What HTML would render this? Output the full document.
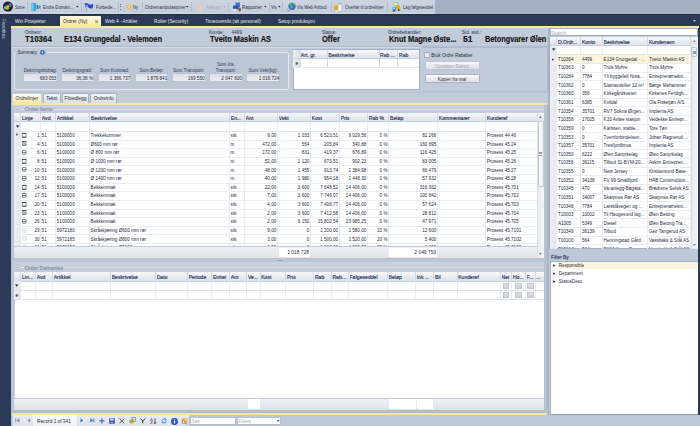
<!DOCTYPE html>
<html><head><meta charset="utf-8"><title>Ordrer</title>
<style>
*{margin:0;padding:0;box-sizing:border-box}
html,body{width:700px;height:426px;overflow:hidden}
body{position:relative;background:#c5cedc;font-family:"Liberation Sans",sans-serif;color:#1f2a3c}
.a{position:absolute}
.t{position:absolute;white-space:nowrap}
svg{position:absolute;overflow:visible}
</style></head><body>

<div class="a" style="left:0.00px;top:0.00px;width:700.00px;height:14.50px;background:#a2afc5"></div>
<div class="a" style="left:0.00px;top:0.00px;width:435.00px;height:14.40px;background:linear-gradient(#cdd5e1,#c4cddb);border-bottom:1px solid #d3dae4"></div>
<div class="a" style="left:27.00px;top:2.00px;width:0.80px;height:10.00px;background:#b3bdcc"></div>
<div class="a" style="left:81.00px;top:2.00px;width:0.80px;height:10.00px;background:#b3bdcc"></div>
<div class="a" style="left:118.00px;top:2.00px;width:0.80px;height:10.00px;background:#b3bdcc"></div>
<div class="a" style="left:142.00px;top:2.00px;width:0.80px;height:10.00px;background:#b3bdcc"></div>
<div class="a" style="left:191.00px;top:2.00px;width:0.80px;height:10.00px;background:#b3bdcc"></div>
<div class="a" style="left:228.00px;top:2.00px;width:0.80px;height:10.00px;background:#b3bdcc"></div>
<div class="a" style="left:269.00px;top:2.00px;width:0.80px;height:10.00px;background:#b3bdcc"></div>
<div class="a" style="left:282.00px;top:2.00px;width:0.80px;height:10.00px;background:#b3bdcc"></div>
<div class="a" style="left:331.00px;top:2.00px;width:0.80px;height:10.00px;background:#b3bdcc"></div>
<div class="a" style="left:387.00px;top:2.00px;width:0.80px;height:10.00px;background:#b3bdcc"></div>
<div class="a" style="left:120.30px;top:3.60px;width:0.80px;height:0.80px;background:#5d6778"></div>
<div class="a" style="left:120.30px;top:6.30px;width:0.80px;height:0.80px;background:#5d6778"></div>
<div class="a" style="left:120.30px;top:9.00px;width:0.80px;height:0.80px;background:#5d6778"></div>
<div class="t" style="font-size:4.8px;line-height:6.00px;top:5.30px;color:#28334a;transform:scaleX(0.865);transform-origin:0 50%;left:14.70px;">Sone</div>
<div class="t" style="font-size:4.8px;line-height:6.00px;top:5.30px;color:#28334a;transform:scaleX(0.874);transform-origin:0 50%;left:42.60px;">Endre Domain...</div>
<div class="t" style="font-size:4.8px;line-height:6.00px;top:5.30px;color:#28334a;transform:scaleX(0.919);transform-origin:0 50%;left:95.70px;">Forbede...</div>
<div class="t" style="font-size:4.8px;line-height:6.00px;top:5.30px;color:#28334a;transform:scaleX(0.869);transform-origin:0 50%;left:133.40px;">Ny</div>
<div class="t" style="font-size:4.8px;line-height:6.00px;top:5.30px;color:#28334a;transform:scaleX(0.906);transform-origin:0 50%;left:144.60px;">Ordremanipulasjoner</div>
<div class="t" style="font-size:4.8px;line-height:6.00px;top:5.30px;color:#a3abb7;transform:scaleX(0.879);transform-origin:0 50%;left:206.30px;">Fakturer</div>
<div class="t" style="font-size:4.8px;line-height:6.00px;top:5.30px;color:#28334a;transform:scaleX(0.937);transform-origin:0 50%;left:242.30px;">Rapporter</div>
<div class="t" style="font-size:4.8px;line-height:6.00px;top:5.30px;color:#28334a;transform:scaleX(0.821);transform-origin:0 50%;left:270.60px;">Vis</div>
<div class="t" style="font-size:4.8px;line-height:6.00px;top:5.30px;color:#28334a;transform:scaleX(0.901);transform-origin:0 50%;left:297.20px;">Vis Web Anbud</div>
<div class="t" style="font-size:4.8px;line-height:6.00px;top:5.30px;color:#28334a;transform:scaleX(0.887);transform-origin:0 50%;left:345.20px;">Overfør til ordrelinjer</div>
<div class="t" style="font-size:4.8px;line-height:6.00px;top:5.30px;color:#28334a;transform:scaleX(0.887);transform-origin:0 50%;left:402.60px;">Lag følgeseddel</div>
<svg style="left:76.0px;top:6.2px" width="3" height="2"><path d="M0 0h2.6L1.3 1.6z" fill="#1f2a3c"/></svg>
<svg style="left:186.4px;top:6.2px" width="3" height="2"><path d="M0 0h2.6L1.3 1.6z" fill="#1f2a3c"/></svg>
<svg style="left:223.10000000000002px;top:6.2px" width="3" height="2"><path d="M0 0h2.6L1.3 1.6z" fill="#9aa3b0"/></svg>
<svg style="left:263.5px;top:6.2px" width="3" height="2"><path d="M0 0h2.6L1.3 1.6z" fill="#1f2a3c"/></svg>
<svg style="left:277.6px;top:6.2px" width="3" height="2"><path d="M0 0h2.6L1.3 1.6z" fill="#1f2a3c"/></svg>
<svg style="left:0px;top:0px" width="14" height="14"><circle cx="7.9" cy="6.6" r="5" fill="#15181d"/><circle cx="7.9" cy="6.6" r="4.6" fill="#23282f"/><path d="M3.6 6.6L6 6.2V9.4L4.3 9z" fill="#3cc6bd"/><path d="M6 5.4L9.3 5L8.7 9.6H6z" fill="#f6a21c"/><path d="M8.8 3.4L11.7 3L11.3 6.6L9.3 6.9z" fill="#2f7ad8"/></svg>
<svg style="left:31px;top:2px" width="10" height="10"><rect x="0.5" y="1" width="4.5" height="8" fill="#3aa3d8"/><rect x="1.2" y="1.5" width="1.2" height="7" fill="#8fd6f2"/><rect x="5.5" y="3" width="2" height="4" fill="#2b87c0"/><rect x="7.8" y="3.5" width="1.8" height="3" fill="#3aa3d8"/></svg>
<svg style="left:84.3px;top:1.5px" width="11" height="11"><path d="M0.5 1.5Q2.5 0.2 4.5 2T9.5 1.6L8.6 6.2Q6.6 7.4 4.6 5.6T1.8 5.8z" fill="#2a48d0"/><path d="M2.5 2.3l0.6 1 1-0.4-0.5 1 0.8 0.7-1 0.1-0.3 1-0.5-0.9-1 0.2 0.6-0.8z" fill="#8fb0ff"/><path d="M1.5 2.5L2.8 10" stroke="#8a8f99" stroke-width="0.6"/></svg>
<svg style="left:126px;top:4.3px" width="6" height="6"><path d="M2.9 0L3.6 1.8 5.5 1 4.4 2.8 5.9 4 4 4.1 3.8 6 2.9 4.6 1.5 5.8 1.7 4 0 3.3 1.6 2.3 0.8 0.8 2.5 1.5z" fill="#f4b21b"/><circle cx="2.95" cy="3" r="1.3" fill="#ffd54a"/></svg>
<svg style="left:197.6px;top:2.6px" width="6" height="9"><rect x="0.3" y="0.3" width="4.2" height="8" fill="#e2ddd3" stroke="#c9c3b8" stroke-width="0.4"/><path d="M1 2h2.8M1 3.5h2.8M1 5h2.8M1 6.5h2.8" stroke="#c4bdb0" stroke-width="0.5"/></svg>
<svg style="left:232px;top:2.2px" width="10" height="10"><path d="M3.5 0.5h4.5v5h-4.5z" fill="#3d78c8"/><path d="M1 3.5h5.5v4H1z" fill="#2b5fae"/><ellipse cx="2.5" cy="8" rx="2.2" ry="1.3" fill="#dfe6f0"/><ellipse cx="7.6" cy="7.6" rx="1.5" ry="1.8" fill="#8a5a3a"/></svg>
<svg style="left:287px;top:2px" width="10" height="10"><circle cx="5" cy="4.3" r="3.6" fill="#2f6fd0"/><path d="M3 1.6c1.2 0.4 1.6 1.4 1 2.2s0.8 1.6 2 1.2M6 1.4c0.8 0.6 1.6 0.4 2 1.4" stroke="#5fcf4a" stroke-width="1.3" fill="none"/><rect x="0.5" y="6.3" width="2.6" height="3" fill="#8c96a5"/><rect x="0.9" y="6.8" width="1.8" height="1.2" fill="#d4dae3"/></svg>
<svg style="left:334.3px;top:2.5px" width="9" height="10"><rect x="0.2" y="2.5" width="4.6" height="4.6" fill="#f1a21a"/><rect x="4" y="0.8" width="3.8" height="7.6" fill="#f3f5f8" stroke="#9ea8b6" stroke-width="0.5"/><path d="M4.8 1.1h2.4" stroke="#58b84a" stroke-width="0.8"/><rect x="1.2" y="7" width="3.5" height="2" fill="#d9dee6"/></svg>
<svg style="left:391.6px;top:2px" width="10" height="10"><rect x="2" y="0.6" width="3" height="2.6" fill="#e9f2e6" stroke="#5cb85c" stroke-width="0.5"/><path d="M3.4 3.2h4.4l0.8 4.2H4z" fill="#f2a81d"/><path d="M0.4 5.2h3.8v3.3H0.4z" fill="#3aa0e0"/><rect x="0.9" y="5.7" width="2" height="1.2" fill="#bfe6fb"/><circle cx="2" cy="8.9" r="0.9" fill="#262b33"/><circle cx="6.8" cy="8.2" r="0.9" fill="#262b33"/></svg>
<div class="a" style="left:0.00px;top:14.40px;width:700.00px;height:411.60px;background:#2b3a56"></div>
<div class="a" style="left:0.00px;top:14.40px;width:700.00px;height:0.80px;background:#1f2b42"></div>
<div class="t" style="font-size:4.75px;line-height:5.94px;top:19.13px;color:#e4e9f1;transform:scaleX(0.997);transform-origin:0 50%;left:15.20px;">Win Prosjekter</div>
<div class="t" style="font-size:4.75px;line-height:5.94px;top:19.13px;color:#e4e9f1;transform:scaleX(1.001);transform-origin:0 50%;left:104.80px;">Web 4 - Artikler</div>
<div class="t" style="font-size:4.75px;line-height:5.94px;top:19.13px;color:#e4e9f1;transform:scaleX(1.007);transform-origin:0 50%;left:153.80px;">Roller (Security)</div>
<div class="t" style="font-size:4.75px;line-height:5.94px;top:19.13px;color:#e4e9f1;transform:scaleX(0.984);transform-origin:0 50%;left:205.00px;">Timeoversikt (alt personell)</div>
<div class="t" style="font-size:4.75px;line-height:5.94px;top:19.13px;color:#e4e9f1;transform:scaleX(0.995);transform-origin:0 50%;left:277.80px;">Setup produksjon</div>
<div class="a" style="left:60.00px;top:16.30px;width:41.00px;height:9.70px;background:linear-gradient(#fffbe8,#fdf0b8 60%,#fbe7a2);border-radius:1px 1px 0 0"></div>
<div class="t" style="font-size:4.75px;line-height:5.94px;top:19.13px;color:#1f2a3c;transform:scaleX(1.016);transform-origin:0 50%;left:63.00px;">Ordrer (Ny)</div>
<div class="t" style="font-size:7px;line-height:8.75px;top:17.93px;color:#4a5a78;left:94.40px;">×</div>
<svg style="left:692.5px;top:19.5px" width="4" height="3"><path d="M0 0h3L1.5 1.8z" fill="#c9d2e0"/></svg>
<div class="t" style="left:-0.2px;top:18.6px;font-size:4.8px;line-height:6px;color:#c3ccda;writing-mode:vertical-rl">Favorites</div>
<div class="a" style="left:11.00px;top:25.80px;width:687.60px;height:1.80px;background:#f9e9a0"></div>
<div class="a" style="left:11.00px;top:27.60px;width:537.40px;height:387.40px;background:#c1cbd9"></div>
<div class="a" style="left:10.70px;top:27.60px;width:0.90px;height:77.40px;background:#b3bfd0"></div>
<div class="a" style="left:10.70px;top:105.00px;width:3.10px;height:310.00px;background:#b9c4d4"></div>
<div class="a" style="left:548.40px;top:27.60px;width:1.20px;height:387.40px;background:#a7b3c6"></div>
<div class="a" style="left:12.60px;top:46.00px;width:535.80px;height:0.80px;background:#aeb9c9"></div>
<div class="a" style="left:12.60px;top:46.80px;width:535.80px;height:0.60px;background:#d5dce6"></div>
<div class="t" style="font-size:4.6px;line-height:5.75px;top:30.23px;color:#27324a;left:25.00px;">Ordrenr:</div>
<div class="t" style="font-size:8.2px;line-height:10.25px;top:34.58px;font-weight:bold;color:#111;transform:scaleX(0.964);transform-origin:0 50%;left:25.00px;-webkit-text-stroke:0.15px #111">T10364</div>
<div class="t" style="font-size:8.2px;line-height:10.25px;top:34.58px;font-weight:bold;color:#111;transform:scaleX(0.909);transform-origin:0 50%;left:63.60px;-webkit-text-stroke:0.15px #111">E134 Grungedal - Velemoen</div>
<div class="t" style="font-size:4.6px;line-height:5.75px;top:30.23px;color:#27324a;left:209.00px;">Kunde:</div>
<div class="t" style="font-size:4.6px;line-height:5.75px;top:30.23px;color:#27324a;left:231.50px;">4499</div>
<div class="t" style="font-size:8.2px;line-height:10.25px;top:34.58px;font-weight:bold;color:#111;transform:scaleX(0.903);transform-origin:0 50%;left:210.20px;-webkit-text-stroke:0.15px #111">Tveito Maskin AS</div>
<div class="t" style="font-size:4.6px;line-height:5.75px;top:30.23px;color:#27324a;left:322.00px;">Status:</div>
<div class="t" style="font-size:8.2px;line-height:10.25px;top:34.58px;font-weight:bold;color:#111;transform:scaleX(0.919);transform-origin:0 50%;left:322.10px;-webkit-text-stroke:0.15px #111">Offer</div>
<div class="t" style="font-size:4.6px;line-height:5.75px;top:30.23px;color:#27324a;left:388.00px;">Ordrebehandler:</div>
<div class="t" style="font-size:8.2px;line-height:10.25px;top:34.58px;font-weight:bold;color:#111;transform:scaleX(0.908);transform-origin:0 50%;left:388.60px;-webkit-text-stroke:0.15px #111">Knut Magne Øste...</div>
<div class="t" style="font-size:4.6px;line-height:5.75px;top:30.23px;color:#27324a;left:461.80px;">Std. avd.:</div>
<div class="t" style="font-size:8.2px;line-height:10.25px;top:34.58px;font-weight:bold;color:#111;transform:scaleX(1.053);transform-origin:0 50%;left:462.60px;-webkit-text-stroke:0.15px #111">51</div>
<div class="t" style="font-size:8.2px;line-height:10.25px;top:34.58px;font-weight:bold;color:#111;transform:scaleX(0.892);transform-origin:0 50%;left:485.40px;-webkit-text-stroke:0.15px #111">Betongvarer Ølen</div>
<div class="a" style="left:14.4px;top:52.3px;width:274.2px;height:37.5px;border:0.9px solid #e6eaf0;border-radius:2px;background:#bcc6d5"></div>
<div class="a" style="left:16.00px;top:50.00px;width:31.00px;height:4.50px;background:linear-gradient(#c1cbd9 50%,#bcc6d5 50%)"></div>
<div class="t" style="font-size:4.5px;line-height:5.62px;top:50.49px;color:#1f2a3c;left:17.60px;">Summary</div>
<svg style="left:40.2px;top:49.7px" width="5" height="5"><circle cx="2.4" cy="2.4" r="2.3" fill="#2a5bc0"/><circle cx="2.1" cy="2" r="1.2" fill="#6e9be8"/><rect x="2.1" y="1.6" width="0.7" height="2" fill="#fff"/></svg>
<div class="a" style="left:22.90px;top:73.20px;width:34.70px;height:8.50px;background:linear-gradient(#dce1e9,#e8ebf0);border:0.7px solid #bac3d0"></div>
<div class="t" style="font-size:4.6px;line-height:5.75px;top:75.62px;color:#1f2a3c;left:16.40px;width:40.00px;text-align:right;">683 053</div>
<div class="t" style="font-size:4.6px;line-height:5.75px;top:68.02px;color:#2a3a5a;left:20.25px;width:40.00px;text-align:center;">Dekningsbidrag:</div>
<div class="a" style="left:60.50px;top:73.20px;width:33.70px;height:8.50px;background:linear-gradient(#dce1e9,#e8ebf0);border:0.7px solid #bac3d0"></div>
<div class="t" style="font-size:4.6px;line-height:5.75px;top:75.62px;color:#1f2a3c;left:53.00px;width:40.00px;text-align:right;">36,38 %</div>
<div class="t" style="font-size:4.6px;line-height:5.75px;top:68.02px;color:#2a3a5a;left:57.35px;width:40.00px;text-align:center;">Dekningsgrad:</div>
<div class="a" style="left:97.60px;top:73.20px;width:33.90px;height:8.50px;background:linear-gradient(#dce1e9,#e8ebf0);border:0.7px solid #bac3d0"></div>
<div class="t" style="font-size:4.6px;line-height:5.75px;top:75.62px;color:#1f2a3c;left:90.30px;width:40.00px;text-align:right;">1 366 737</div>
<div class="t" style="font-size:4.6px;line-height:5.75px;top:68.02px;color:#2a3a5a;left:94.55px;width:40.00px;text-align:center;">Sum Kostnad:</div>
<div class="a" style="left:134.70px;top:73.20px;width:33.70px;height:8.50px;background:linear-gradient(#dce1e9,#e8ebf0);border:0.7px solid #bac3d0"></div>
<div class="t" style="font-size:4.6px;line-height:5.75px;top:75.62px;color:#1f2a3c;left:127.20px;width:40.00px;text-align:right;">1 879 841</div>
<div class="t" style="font-size:4.6px;line-height:5.75px;top:68.02px;color:#2a3a5a;left:131.55px;width:40.00px;text-align:center;">Sum Beløp:</div>
<div class="a" style="left:171.70px;top:73.20px;width:34.00px;height:8.50px;background:linear-gradient(#dce1e9,#e8ebf0);border:0.7px solid #bac3d0"></div>
<div class="t" style="font-size:4.6px;line-height:5.75px;top:75.62px;color:#1f2a3c;left:164.50px;width:40.00px;text-align:right;">169 550</div>
<div class="t" style="font-size:4.6px;line-height:5.75px;top:68.02px;color:#2a3a5a;left:168.70px;width:40.00px;text-align:center;">Sum Transport:</div>
<div class="a" style="left:209.00px;top:73.20px;width:34.00px;height:8.50px;background:linear-gradient(#dce1e9,#e8ebf0);border:0.7px solid #bac3d0"></div>
<div class="t" style="font-size:4.6px;line-height:5.75px;top:75.62px;color:#1f2a3c;left:201.80px;width:40.00px;text-align:right;">2 047 600</div>
<div class="t" style="font-size:4.6px;line-height:5.75px;top:61.92px;color:#2a3a5a;left:206.00px;width:40.00px;text-align:center;">Sum Ink.</div>
<div class="t" style="font-size:4.6px;line-height:5.75px;top:68.02px;color:#2a3a5a;left:206.00px;width:40.00px;text-align:center;">Transport:</div>
<div class="a" style="left:246.20px;top:73.20px;width:34.20px;height:8.50px;background:linear-gradient(#dce1e9,#e8ebf0);border:0.7px solid #bac3d0"></div>
<div class="t" style="font-size:4.6px;line-height:5.75px;top:75.62px;color:#1f2a3c;left:239.20px;width:40.00px;text-align:right;">1 016 724</div>
<div class="t" style="font-size:4.6px;line-height:5.75px;top:68.02px;color:#2a3a5a;left:243.30px;width:40.00px;text-align:center;">Sum Vekt(kg):</div>
<div class="a" style="left:292.50px;top:48.80px;width:127.70px;height:41.20px;background:#fff;border:0.8px solid #9fb0c6"></div>
<div class="a" style="left:293.20px;top:49.50px;width:126.30px;height:8.90px;background:linear-gradient(#f6f7fa,#dfe4eb)"></div>
<div class="a" style="left:293.20px;top:49.50px;width:6.40px;height:17.50px;background:linear-gradient(90deg,#e9ecf1,#dde2e9)"></div>
<div class="a" style="left:299.60px;top:49.50px;width:0.70px;height:17.50px;background:#d3d9e2"></div>
<div class="a" style="left:327.20px;top:49.50px;width:0.70px;height:17.50px;background:#d3d9e2"></div>
<div class="a" style="left:378.70px;top:49.50px;width:0.70px;height:17.50px;background:#d3d9e2"></div>
<div class="a" style="left:397.40px;top:49.50px;width:0.70px;height:17.50px;background:#d3d9e2"></div>
<div class="a" style="left:293.20px;top:58.10px;width:126.30px;height:0.60px;background:#c9d0da"></div>
<div class="a" style="left:293.20px;top:66.80px;width:126.30px;height:0.60px;background:#e3e7ed"></div>
<div class="t" style="font-size:5.1px;line-height:6.38px;top:51.71px;color:#263a60;left:300.80px;-webkit-text-stroke:0.15px #1f3358">Art. gr.</div>
<div class="t" style="font-size:5.1px;line-height:6.38px;top:51.71px;color:#263a60;left:328.60px;-webkit-text-stroke:0.15px #1f3358">Beskrivelse</div>
<div class="t" style="font-size:5.1px;line-height:6.38px;top:51.71px;color:#263a60;left:380.00px;-webkit-text-stroke:0.15px #1f3358">Rab ...</div>
<div class="t" style="font-size:5.1px;line-height:6.38px;top:51.71px;color:#263a60;left:399.00px;-webkit-text-stroke:0.15px #1f3358">Rab</div>
<div class="t" style="font-size:4px;line-height:5.00px;top:61.40px;color:#3b4a63;left:294.60px;">✱</div>
<div class="a" style="left:421.5px;top:46.9px;width:126px;height:45.6px;border:0.8px solid #b0bccc;border-left:none;border-radius:0 2px 2px 0"></div>
<div class="a" style="left:424.20px;top:51.60px;width:6.20px;height:6.00px;background:linear-gradient(#dfe3ea,#f3f5f8);border:0.8px solid #a4afbf"></div>
<div class="t" style="font-size:4.6px;line-height:5.75px;top:53.23px;color:#1f2a3c;left:431.20px;">Bruk Ordre Rabatter</div>
<div class="a" style="left:424.60px;top:60.90px;width:55.10px;height:9.40px;background:linear-gradient(#fafbfc,#e6e9ee 50%,#dde1e8);border:0.8px solid #bcc4d0;border-radius:1.5px"></div>
<div class="t" style="font-size:4.6px;line-height:5.75px;top:63.82px;color:#a2aab6;left:425.00px;width:54.00px;text-align:center;">Oppdater Rabatt</div>
<div class="a" style="left:424.60px;top:73.70px;width:55.10px;height:9.60px;background:linear-gradient(#fcfcfd,#e8ebf0 50%,#dde1e8);border:0.8px solid #a9b3c2;border-radius:1.5px"></div>
<div class="t" style="font-size:4.6px;line-height:5.75px;top:76.82px;color:#1f2a3c;left:425.00px;width:54.00px;text-align:center;">Kopier fra mal</div>
<div class="a" style="left:12.60px;top:91.80px;width:535.80px;height:0.70px;background:#b8c3d2"></div>
<div class="a" style="left:12.40px;top:93.00px;width:29.80px;height:10.00px;background:linear-gradient(#fdfcf6,#fbeeb8 70%,#f9e39a);border:0.6px solid #c7cfda;border-bottom:none"></div>
<div class="t" style="font-size:4.8px;line-height:6.00px;top:96.00px;color:#1f2a3c;left:15.60px;">Ordrelinjer</div>
<div class="a" style="left:42.90px;top:93.00px;width:17.90px;height:10.00px;background:linear-gradient(#f1f3f7,#d9dfe8);border:0.6px solid #aab6c7;border-bottom:none"></div>
<div class="t" style="font-size:4.8px;line-height:6.00px;top:96.00px;color:#1f2a3c;left:31.85px;width:40.00px;text-align:center;">Tekst</div>
<div class="a" style="left:61.50px;top:93.00px;width:27.90px;height:10.00px;background:linear-gradient(#f1f3f7,#d9dfe8);border:0.6px solid #aab6c7;border-bottom:none"></div>
<div class="t" style="font-size:4.8px;line-height:6.00px;top:96.00px;color:#1f2a3c;left:55.45px;width:40.00px;text-align:center;">Filvedlegg</div>
<div class="a" style="left:90.10px;top:93.00px;width:27.10px;height:10.00px;background:linear-gradient(#f1f3f7,#d9dfe8);border:0.6px solid #aab6c7;border-bottom:none"></div>
<div class="t" style="font-size:4.8px;line-height:6.00px;top:96.00px;color:#1f2a3c;left:83.65px;width:40.00px;text-align:center;">Ordreinfo</div>
<div class="a" style="left:11.90px;top:102.80px;width:535.10px;height:2.20px;background:#f9e9a0"></div>
<div class="a" style="left:12.60px;top:105.20px;width:534.40px;height:7.40px;background:linear-gradient(#c9d2de,#c3ccd9)"></div>
<div class="a" style="left:19.40px;top:108.75px;width:4.40px;height:0.70px;background:#d9dfe8"></div>
<div class="a" style="left:54.38px;top:108.75px;width:490.62px;height:0.70px;background:#d9dfe8"></div>
<svg style="left:14.20px;top:106.70px" width="6" height="5"><rect x="0.3" y="0.3" width="5" height="4.3" rx="1.2" fill="#d3d9e3" stroke="#a6b1c2" stroke-width="0.5"/><rect x="1.6" y="2.2" width="2.4" height="0.55" fill="#7d8aa0"/></svg>
<div class="t" style="font-size:5.3px;line-height:6.62px;top:105.99px;color:#7f8da6;left:24.80px;-webkit-text-stroke:0.1px #7f8da6">Order Items</div>
<div class="a" style="left:13.80px;top:112.60px;width:530.40px;height:145.40px;background:#fff;border-left:0.6px solid #c3cbd7"></div>
<div class="a" style="left:13.80px;top:112.60px;width:530.40px;height:9.40px;background:linear-gradient(#f7f8fa,#e9ecf1 50%,#dde2e9)"></div>
<div class="a" style="left:13.80px;top:121.40px;width:530.40px;height:0.60px;background:#c9d0da"></div>
<div class="a" style="left:14.40px;top:122.00px;width:6.30px;height:124.10px;background:linear-gradient(90deg,#eceef3,#e2e6ec)"></div>
<div class="t" style="font-size:5.1px;line-height:6.38px;top:115.21px;color:#1f3358;left:22.00px;-webkit-text-stroke:0.15px #1f3358;width:18.30px;overflow:hidden">Linje</div>
<div class="t" style="font-size:5.1px;line-height:6.38px;top:115.21px;color:#1f3358;left:41.80px;-webkit-text-stroke:0.15px #1f3358;width:13.50px;overflow:hidden">Avd</div>
<div class="t" style="font-size:5.1px;line-height:6.38px;top:115.21px;color:#1f3358;left:56.80px;-webkit-text-stroke:0.15px #1f3358;width:32.50px;overflow:hidden">Artikkel</div>
<div class="t" style="font-size:5.1px;line-height:6.38px;top:115.21px;color:#1f3358;left:90.80px;-webkit-text-stroke:0.15px #1f3358;width:138.50px;overflow:hidden">Beskrivelse</div>
<div class="t" style="font-size:5.1px;line-height:6.38px;top:115.21px;color:#1f3358;left:230.80px;-webkit-text-stroke:0.15px #1f3358;width:13.50px;overflow:hidden">En...</div>
<div class="t" style="font-size:5.1px;line-height:6.38px;top:115.21px;color:#1f3358;left:245.80px;-webkit-text-stroke:0.15px #1f3358;width:31.50px;overflow:hidden">Ant</div>
<div class="t" style="font-size:5.1px;line-height:6.38px;top:115.21px;color:#1f3358;left:278.80px;-webkit-text-stroke:0.15px #1f3358;width:31.50px;overflow:hidden">Vekt</div>
<div class="t" style="font-size:5.1px;line-height:6.38px;top:115.21px;color:#1f3358;left:311.80px;-webkit-text-stroke:0.15px #1f3358;width:27.25px;overflow:hidden">Kost</div>
<div class="t" style="font-size:5.1px;line-height:6.38px;top:115.21px;color:#1f3358;left:340.55px;-webkit-text-stroke:0.15px #1f3358;width:26.75px;overflow:hidden">Pris</div>
<div class="t" style="font-size:5.1px;line-height:6.38px;top:115.21px;color:#1f3358;left:368.80px;-webkit-text-stroke:0.15px #1f3358;width:19.75px;overflow:hidden">Rab %</div>
<div class="t" style="font-size:5.1px;line-height:6.38px;top:115.21px;color:#1f3358;left:390.05px;-webkit-text-stroke:0.15px #1f3358;width:47.25px;overflow:hidden">Beløp</div>
<div class="t" style="font-size:5.1px;line-height:6.38px;top:115.21px;color:#1f3358;left:438.80px;-webkit-text-stroke:0.15px #1f3358;width:46.50px;overflow:hidden">Kommentarer</div>
<div class="t" style="font-size:5.1px;line-height:6.38px;top:115.21px;color:#1f3358;left:486.80px;-webkit-text-stroke:0.15px #1f3358;width:50.20px;overflow:hidden">Kunderef</div>
<div class="a" style="left:20.35px;top:113.10px;width:0.70px;height:8.90px;background:#d2d8e1"></div>
<div class="a" style="left:20.40px;top:122.00px;width:0.60px;height:124.10px;background:#e9ecf1"></div>
<div class="a" style="left:40.15px;top:113.10px;width:0.70px;height:8.90px;background:#d2d8e1"></div>
<div class="a" style="left:40.20px;top:122.00px;width:0.60px;height:124.10px;background:#e9ecf1"></div>
<div class="a" style="left:55.15px;top:113.10px;width:0.70px;height:8.90px;background:#d2d8e1"></div>
<div class="a" style="left:55.20px;top:122.00px;width:0.60px;height:124.10px;background:#e9ecf1"></div>
<div class="a" style="left:89.15px;top:113.10px;width:0.70px;height:8.90px;background:#d2d8e1"></div>
<div class="a" style="left:89.20px;top:122.00px;width:0.60px;height:124.10px;background:#e9ecf1"></div>
<div class="a" style="left:229.15px;top:113.10px;width:0.70px;height:8.90px;background:#d2d8e1"></div>
<div class="a" style="left:229.20px;top:122.00px;width:0.60px;height:124.10px;background:#e9ecf1"></div>
<div class="a" style="left:244.15px;top:113.10px;width:0.70px;height:8.90px;background:#d2d8e1"></div>
<div class="a" style="left:244.20px;top:122.00px;width:0.60px;height:124.10px;background:#e9ecf1"></div>
<div class="a" style="left:277.15px;top:113.10px;width:0.70px;height:8.90px;background:#d2d8e1"></div>
<div class="a" style="left:277.20px;top:122.00px;width:0.60px;height:124.10px;background:#e9ecf1"></div>
<div class="a" style="left:310.15px;top:113.10px;width:0.70px;height:8.90px;background:#d2d8e1"></div>
<div class="a" style="left:310.20px;top:122.00px;width:0.60px;height:124.10px;background:#e9ecf1"></div>
<div class="a" style="left:338.90px;top:113.10px;width:0.70px;height:8.90px;background:#d2d8e1"></div>
<div class="a" style="left:338.95px;top:122.00px;width:0.60px;height:124.10px;background:#e9ecf1"></div>
<div class="a" style="left:367.15px;top:113.10px;width:0.70px;height:8.90px;background:#d2d8e1"></div>
<div class="a" style="left:367.20px;top:122.00px;width:0.60px;height:124.10px;background:#e9ecf1"></div>
<div class="a" style="left:388.40px;top:113.10px;width:0.70px;height:8.90px;background:#d2d8e1"></div>
<div class="a" style="left:388.45px;top:122.00px;width:0.60px;height:124.10px;background:#e9ecf1"></div>
<div class="a" style="left:437.15px;top:113.10px;width:0.70px;height:8.90px;background:#d2d8e1"></div>
<div class="a" style="left:437.20px;top:122.00px;width:0.60px;height:124.10px;background:#e9ecf1"></div>
<div class="a" style="left:485.15px;top:113.10px;width:0.70px;height:8.90px;background:#d2d8e1"></div>
<div class="a" style="left:485.20px;top:122.00px;width:0.60px;height:124.10px;background:#e9ecf1"></div>
<div class="a" style="left:536.85px;top:113.10px;width:0.70px;height:8.90px;background:#d2d8e1"></div>
<div class="a" style="left:536.90px;top:122.00px;width:0.60px;height:124.10px;background:#e9ecf1"></div>
<div class="a" style="left:13.80px;top:130.60px;width:523.40px;height:0.60px;background:#e1e5eb"></div>
<svg style="left:15.5px;top:124.9px" width="4" height="4"><path d="M0 0.3h3.4L1.7 3z" fill="#33415a"/></svg>
<div class="a" style="left:0;top:0;width:700px;height:246.10px;overflow:hidden">
<div class="a" style="left:20.70px;top:139.53px;width:516.50px;height:0.60px;background:#e9ecf1"></div>
<div class="a" style="left:14.40px;top:139.53px;width:6.30px;height:0.60px;background:#f4f5f8"></div>
<svg style="left:21.9px;top:132.72px" width="5" height="5"><path d="M0.3 0.3h3.8v4H0.3z" fill="none" stroke="#3e4657" stroke-width="0.55"/><rect x="0" y="0" width="4.4" height="0.9" fill="#3e4657"/><rect x="0" y="3.7" width="4.4" height="0.9" fill="#3e4657"/></svg>
<div class="t" style="font-size:4.6px;line-height:5.75px;top:133.04px;color:#1f2a3c;left:24.50px;width:15.00px;text-align:right;">1</div>
<div class="t" style="font-size:4.6px;line-height:5.75px;top:133.04px;color:#1f2a3c;left:41.60px;">51</div>
<div class="t" style="font-size:4.6px;line-height:5.75px;top:133.04px;color:#1f2a3c;left:56.80px;">5100000</div>
<div class="t" style="font-size:4.6px;line-height:5.75px;top:133.04px;color:#1f2a3c;left:90.60px;">Trekkekummer</div>
<div class="t" style="font-size:4.6px;line-height:5.75px;top:133.04px;color:#1f2a3c;left:230.60px;">stk</div>
<div class="t" style="font-size:4.6px;line-height:5.75px;top:133.04px;color:#1f2a3c;left:246.30px;width:30.00px;text-align:right;">9,00</div>
<div class="t" style="font-size:4.6px;line-height:5.75px;top:133.04px;color:#1f2a3c;left:279.30px;width:30.00px;text-align:right;">1 033</div>
<div class="t" style="font-size:4.6px;line-height:5.75px;top:133.04px;color:#1f2a3c;left:308.10px;width:30.00px;text-align:right;">6 523,51</div>
<div class="t" style="font-size:4.6px;line-height:5.75px;top:133.04px;color:#1f2a3c;left:336.30px;width:30.00px;text-align:right;">9 029,56</div>
<div class="t" style="font-size:4.6px;line-height:5.75px;top:133.04px;color:#1f2a3c;left:367.50px;width:20.00px;text-align:right;">0 %</div>
<div class="t" style="font-size:4.6px;line-height:5.75px;top:133.04px;color:#1f2a3c;left:396.30px;width:40.00px;text-align:right;">81 266</div>
<div class="t" style="font-size:4.6px;line-height:5.75px;top:133.04px;color:#1f2a3c;left:486.80px;">Prosess 44.46</div>
<svg style="left:15.8px;top:133.31px" width="3" height="3"><path d="M0.2 0.2L2.2 1.5L0.2 2.8z" fill="#33415a"/></svg>
<div class="a" style="left:20.70px;top:148.16px;width:516.50px;height:0.60px;background:#e9ecf1"></div>
<div class="a" style="left:14.40px;top:148.16px;width:6.30px;height:0.60px;background:#f4f5f8"></div>
<svg style="left:21.9px;top:141.34px" width="5" height="5"><rect x="0" y="0" width="4.4" height="0.9" fill="#3e4657"/><rect x="0" y="3.7" width="4.4" height="0.9" fill="#3e4657"/><path d="M0.3 0.5v3.6M4.1 0.5v3.6M0.8 1L2.2 2.3 3.6 1M0.8 3.6L2.2 2.3 3.6 3.6" stroke="#3e4657" stroke-width="0.5" fill="none"/></svg>
<div class="t" style="font-size:4.6px;line-height:5.75px;top:141.67px;color:#1f2a3c;left:24.50px;width:15.00px;text-align:right;">4</div>
<div class="t" style="font-size:4.6px;line-height:5.75px;top:141.67px;color:#1f2a3c;left:41.60px;">51</div>
<div class="t" style="font-size:4.6px;line-height:5.75px;top:141.67px;color:#1f2a3c;left:56.80px;">5100000</div>
<div class="t" style="font-size:4.6px;line-height:5.75px;top:141.67px;color:#1f2a3c;left:90.60px;">Ø600 mm rør</div>
<div class="t" style="font-size:4.6px;line-height:5.75px;top:141.67px;color:#1f2a3c;left:230.60px;">m</div>
<div class="t" style="font-size:4.6px;line-height:5.75px;top:141.67px;color:#1f2a3c;left:246.30px;width:30.00px;text-align:right;">472,00</div>
<div class="t" style="font-size:4.6px;line-height:5.75px;top:141.67px;color:#1f2a3c;left:279.30px;width:30.00px;text-align:right;">554</div>
<div class="t" style="font-size:4.6px;line-height:5.75px;top:141.67px;color:#1f2a3c;left:308.10px;width:30.00px;text-align:right;">205,84</div>
<div class="t" style="font-size:4.6px;line-height:5.75px;top:141.67px;color:#1f2a3c;left:336.30px;width:30.00px;text-align:right;">340,88</div>
<div class="t" style="font-size:4.6px;line-height:5.75px;top:141.67px;color:#1f2a3c;left:367.50px;width:20.00px;text-align:right;">0 %</div>
<div class="t" style="font-size:4.6px;line-height:5.75px;top:141.67px;color:#1f2a3c;left:396.30px;width:40.00px;text-align:right;">160 895</div>
<div class="t" style="font-size:4.6px;line-height:5.75px;top:141.67px;color:#1f2a3c;left:486.80px;">Prosess 45.24</div>
<div class="a" style="left:20.70px;top:156.79px;width:516.50px;height:0.60px;background:#e9ecf1"></div>
<div class="a" style="left:14.40px;top:156.79px;width:6.30px;height:0.60px;background:#f4f5f8"></div>
<svg style="left:21.9px;top:149.97px" width="5" height="5"><rect x="0.4" y="0.4" width="3.6" height="3.8" rx="0.4" fill="none" stroke="#3e4657" stroke-width="0.7"/><rect x="0.4" y="2" width="3.6" height="0.6" fill="#3e4657"/></svg>
<div class="t" style="font-size:4.6px;line-height:5.75px;top:150.30px;color:#1f2a3c;left:24.50px;width:15.00px;text-align:right;">6</div>
<div class="t" style="font-size:4.6px;line-height:5.75px;top:150.30px;color:#1f2a3c;left:41.60px;">51</div>
<div class="t" style="font-size:4.6px;line-height:5.75px;top:150.30px;color:#1f2a3c;left:56.80px;">5100000</div>
<div class="t" style="font-size:4.6px;line-height:5.75px;top:150.30px;color:#1f2a3c;left:90.60px;">Ø 800 mm rør</div>
<div class="t" style="font-size:4.6px;line-height:5.75px;top:150.30px;color:#1f2a3c;left:230.60px;">m</div>
<div class="t" style="font-size:4.6px;line-height:5.75px;top:150.30px;color:#1f2a3c;left:246.30px;width:30.00px;text-align:right;">172,00</div>
<div class="t" style="font-size:4.6px;line-height:5.75px;top:150.30px;color:#1f2a3c;left:279.30px;width:30.00px;text-align:right;">831</div>
<div class="t" style="font-size:4.6px;line-height:5.75px;top:150.30px;color:#1f2a3c;left:308.10px;width:30.00px;text-align:right;">419,37</div>
<div class="t" style="font-size:4.6px;line-height:5.75px;top:150.30px;color:#1f2a3c;left:336.30px;width:30.00px;text-align:right;">676,89</div>
<div class="t" style="font-size:4.6px;line-height:5.75px;top:150.30px;color:#1f2a3c;left:367.50px;width:20.00px;text-align:right;">0 %</div>
<div class="t" style="font-size:4.6px;line-height:5.75px;top:150.30px;color:#1f2a3c;left:396.30px;width:40.00px;text-align:right;">116 425</div>
<div class="t" style="font-size:4.6px;line-height:5.75px;top:150.30px;color:#1f2a3c;left:486.80px;">Prosess 45.25</div>
<div class="a" style="left:20.70px;top:165.42px;width:516.50px;height:0.60px;background:#e9ecf1"></div>
<div class="a" style="left:14.40px;top:165.42px;width:6.30px;height:0.60px;background:#f4f5f8"></div>
<svg style="left:21.9px;top:158.60px" width="5" height="5"><path d="M0.3 0.3h3.8v4H0.3z" fill="none" stroke="#3e4657" stroke-width="0.55"/><rect x="0" y="0" width="4.4" height="0.9" fill="#3e4657"/><rect x="0" y="3.7" width="4.4" height="0.9" fill="#3e4657"/></svg>
<div class="t" style="font-size:4.6px;line-height:5.75px;top:158.93px;color:#1f2a3c;left:24.50px;width:15.00px;text-align:right;">8</div>
<div class="t" style="font-size:4.6px;line-height:5.75px;top:158.93px;color:#1f2a3c;left:41.60px;">51</div>
<div class="t" style="font-size:4.6px;line-height:5.75px;top:158.93px;color:#1f2a3c;left:56.80px;">5100000</div>
<div class="t" style="font-size:4.6px;line-height:5.75px;top:158.93px;color:#1f2a3c;left:90.60px;">Ø 1000 mm rør</div>
<div class="t" style="font-size:4.6px;line-height:5.75px;top:158.93px;color:#1f2a3c;left:230.60px;">m</div>
<div class="t" style="font-size:4.6px;line-height:5.75px;top:158.93px;color:#1f2a3c;left:246.30px;width:30.00px;text-align:right;">52,00</div>
<div class="t" style="font-size:4.6px;line-height:5.75px;top:158.93px;color:#1f2a3c;left:279.30px;width:30.00px;text-align:right;">1 120</div>
<div class="t" style="font-size:4.6px;line-height:5.75px;top:158.93px;color:#1f2a3c;left:308.10px;width:30.00px;text-align:right;">673,51</div>
<div class="t" style="font-size:4.6px;line-height:5.75px;top:158.93px;color:#1f2a3c;left:336.30px;width:30.00px;text-align:right;">902,23</div>
<div class="t" style="font-size:4.6px;line-height:5.75px;top:158.93px;color:#1f2a3c;left:367.50px;width:20.00px;text-align:right;">0 %</div>
<div class="t" style="font-size:4.6px;line-height:5.75px;top:158.93px;color:#1f2a3c;left:396.30px;width:40.00px;text-align:right;">83 005</div>
<div class="t" style="font-size:4.6px;line-height:5.75px;top:158.93px;color:#1f2a3c;left:486.80px;">Prosess 45.26</div>
<div class="a" style="left:20.70px;top:174.05px;width:516.50px;height:0.60px;background:#e9ecf1"></div>
<div class="a" style="left:14.40px;top:174.05px;width:6.30px;height:0.60px;background:#f4f5f8"></div>
<svg style="left:21.9px;top:167.24px" width="5" height="5"><rect x="0.4" y="0.4" width="3.6" height="3.8" rx="0.4" fill="none" stroke="#3e4657" stroke-width="0.7"/><rect x="0.4" y="2" width="3.6" height="0.6" fill="#3e4657"/></svg>
<div class="t" style="font-size:4.6px;line-height:5.75px;top:167.56px;color:#1f2a3c;left:24.50px;width:15.00px;text-align:right;">10</div>
<div class="t" style="font-size:4.6px;line-height:5.75px;top:167.56px;color:#1f2a3c;left:41.60px;">51</div>
<div class="t" style="font-size:4.6px;line-height:5.75px;top:167.56px;color:#1f2a3c;left:56.80px;">5100000</div>
<div class="t" style="font-size:4.6px;line-height:5.75px;top:167.56px;color:#1f2a3c;left:90.60px;">Ø 1200 mm rør</div>
<div class="t" style="font-size:4.6px;line-height:5.75px;top:167.56px;color:#1f2a3c;left:230.60px;">m</div>
<div class="t" style="font-size:4.6px;line-height:5.75px;top:167.56px;color:#1f2a3c;left:246.30px;width:30.00px;text-align:right;">48,00</div>
<div class="t" style="font-size:4.6px;line-height:5.75px;top:167.56px;color:#1f2a3c;left:279.30px;width:30.00px;text-align:right;">1 455</div>
<div class="t" style="font-size:4.6px;line-height:5.75px;top:167.56px;color:#1f2a3c;left:308.10px;width:30.00px;text-align:right;">913,74</div>
<div class="t" style="font-size:4.6px;line-height:5.75px;top:167.56px;color:#1f2a3c;left:336.30px;width:30.00px;text-align:right;">1 384,98</div>
<div class="t" style="font-size:4.6px;line-height:5.75px;top:167.56px;color:#1f2a3c;left:367.50px;width:20.00px;text-align:right;">0 %</div>
<div class="t" style="font-size:4.6px;line-height:5.75px;top:167.56px;color:#1f2a3c;left:396.30px;width:40.00px;text-align:right;">66 479</div>
<div class="t" style="font-size:4.6px;line-height:5.75px;top:167.56px;color:#1f2a3c;left:486.80px;">Prosess 45.27</div>
<div class="a" style="left:20.70px;top:182.68px;width:516.50px;height:0.60px;background:#e9ecf1"></div>
<div class="a" style="left:14.40px;top:182.68px;width:6.30px;height:0.60px;background:#f4f5f8"></div>
<svg style="left:21.9px;top:175.87px" width="5" height="5"><rect x="0.4" y="0.4" width="3.6" height="3.8" rx="0.4" fill="none" stroke="#3e4657" stroke-width="0.7"/><rect x="0.4" y="2" width="3.6" height="0.6" fill="#3e4657"/></svg>
<div class="t" style="font-size:4.6px;line-height:5.75px;top:176.19px;color:#1f2a3c;left:24.50px;width:15.00px;text-align:right;">12</div>
<div class="t" style="font-size:4.6px;line-height:5.75px;top:176.19px;color:#1f2a3c;left:41.60px;">51</div>
<div class="t" style="font-size:4.6px;line-height:5.75px;top:176.19px;color:#1f2a3c;left:56.80px;">5100000</div>
<div class="t" style="font-size:4.6px;line-height:5.75px;top:176.19px;color:#1f2a3c;left:90.60px;">Ø 1400 mm rør</div>
<div class="t" style="font-size:4.6px;line-height:5.75px;top:176.19px;color:#1f2a3c;left:230.60px;">m</div>
<div class="t" style="font-size:4.6px;line-height:5.75px;top:176.19px;color:#1f2a3c;left:246.30px;width:30.00px;text-align:right;">40,00</div>
<div class="t" style="font-size:4.6px;line-height:5.75px;top:176.19px;color:#1f2a3c;left:279.30px;width:30.00px;text-align:right;">1 980</div>
<div class="t" style="font-size:4.6px;line-height:5.75px;top:176.19px;color:#1f2a3c;left:308.10px;width:30.00px;text-align:right;">954,18</div>
<div class="t" style="font-size:4.6px;line-height:5.75px;top:176.19px;color:#1f2a3c;left:336.30px;width:30.00px;text-align:right;">1 448,30</div>
<div class="t" style="font-size:4.6px;line-height:5.75px;top:176.19px;color:#1f2a3c;left:367.50px;width:20.00px;text-align:right;">0 %</div>
<div class="t" style="font-size:4.6px;line-height:5.75px;top:176.19px;color:#1f2a3c;left:396.30px;width:40.00px;text-align:right;">57 932</div>
<div class="t" style="font-size:4.6px;line-height:5.75px;top:176.19px;color:#1f2a3c;left:486.80px;">Prosess 45.28</div>
<div class="a" style="left:20.70px;top:191.31px;width:516.50px;height:0.60px;background:#e9ecf1"></div>
<div class="a" style="left:14.40px;top:191.31px;width:6.30px;height:0.60px;background:#f4f5f8"></div>
<svg style="left:21.9px;top:184.50px" width="5" height="5"><path d="M0.3 0.3h3.8v4H0.3z" fill="none" stroke="#3e4657" stroke-width="0.55"/><rect x="0" y="0" width="4.4" height="0.9" fill="#3e4657"/><rect x="0" y="3.7" width="4.4" height="0.9" fill="#3e4657"/></svg>
<div class="t" style="font-size:4.6px;line-height:5.75px;top:184.82px;color:#1f2a3c;left:24.50px;width:15.00px;text-align:right;">14</div>
<div class="t" style="font-size:4.6px;line-height:5.75px;top:184.82px;color:#1f2a3c;left:41.60px;">51</div>
<div class="t" style="font-size:4.6px;line-height:5.75px;top:184.82px;color:#1f2a3c;left:56.80px;">5100000</div>
<div class="t" style="font-size:4.6px;line-height:5.75px;top:184.82px;color:#1f2a3c;left:90.60px;">Bekkeinntak</div>
<div class="t" style="font-size:4.6px;line-height:5.75px;top:184.82px;color:#1f2a3c;left:230.60px;">stk</div>
<div class="t" style="font-size:4.6px;line-height:5.75px;top:184.82px;color:#1f2a3c;left:246.30px;width:30.00px;text-align:right;">22,00</div>
<div class="t" style="font-size:4.6px;line-height:5.75px;top:184.82px;color:#1f2a3c;left:279.30px;width:30.00px;text-align:right;">3 600</div>
<div class="t" style="font-size:4.6px;line-height:5.75px;top:184.82px;color:#1f2a3c;left:308.10px;width:30.00px;text-align:right;">7 648,52</div>
<div class="t" style="font-size:4.6px;line-height:5.75px;top:184.82px;color:#1f2a3c;left:336.30px;width:30.00px;text-align:right;">14 406,00</div>
<div class="t" style="font-size:4.6px;line-height:5.75px;top:184.82px;color:#1f2a3c;left:367.50px;width:20.00px;text-align:right;">0 %</div>
<div class="t" style="font-size:4.6px;line-height:5.75px;top:184.82px;color:#1f2a3c;left:396.30px;width:40.00px;text-align:right;">316 932</div>
<div class="t" style="font-size:4.6px;line-height:5.75px;top:184.82px;color:#1f2a3c;left:486.80px;">Prosess 45.701</div>
<div class="a" style="left:20.70px;top:199.94px;width:516.50px;height:0.60px;background:#e9ecf1"></div>
<div class="a" style="left:14.40px;top:199.94px;width:6.30px;height:0.60px;background:#f4f5f8"></div>
<svg style="left:21.9px;top:193.12px" width="5" height="5"><rect x="0.4" y="0.4" width="3.6" height="3.8" rx="0.4" fill="none" stroke="#3e4657" stroke-width="0.7"/><rect x="0.4" y="2" width="3.6" height="0.6" fill="#3e4657"/></svg>
<div class="t" style="font-size:4.6px;line-height:5.75px;top:193.45px;color:#1f2a3c;left:24.50px;width:15.00px;text-align:right;">17</div>
<div class="t" style="font-size:4.6px;line-height:5.75px;top:193.45px;color:#1f2a3c;left:41.60px;">51</div>
<div class="t" style="font-size:4.6px;line-height:5.75px;top:193.45px;color:#1f2a3c;left:56.80px;">5100000</div>
<div class="t" style="font-size:4.6px;line-height:5.75px;top:193.45px;color:#1f2a3c;left:90.60px;">Bekkeinntak</div>
<div class="t" style="font-size:4.6px;line-height:5.75px;top:193.45px;color:#1f2a3c;left:230.60px;">stk</div>
<div class="t" style="font-size:4.6px;line-height:5.75px;top:193.45px;color:#1f2a3c;left:246.30px;width:30.00px;text-align:right;">7,00</div>
<div class="t" style="font-size:4.6px;line-height:5.75px;top:193.45px;color:#1f2a3c;left:279.30px;width:30.00px;text-align:right;">3 600</div>
<div class="t" style="font-size:4.6px;line-height:5.75px;top:193.45px;color:#1f2a3c;left:308.10px;width:30.00px;text-align:right;">7 746,07</div>
<div class="t" style="font-size:4.6px;line-height:5.75px;top:193.45px;color:#1f2a3c;left:336.30px;width:30.00px;text-align:right;">14 406,00</div>
<div class="t" style="font-size:4.6px;line-height:5.75px;top:193.45px;color:#1f2a3c;left:367.50px;width:20.00px;text-align:right;">0 %</div>
<div class="t" style="font-size:4.6px;line-height:5.75px;top:193.45px;color:#1f2a3c;left:396.30px;width:40.00px;text-align:right;">100 842</div>
<div class="t" style="font-size:4.6px;line-height:5.75px;top:193.45px;color:#1f2a3c;left:486.80px;">Prosess 45.702</div>
<div class="a" style="left:20.70px;top:208.57px;width:516.50px;height:0.60px;background:#e9ecf1"></div>
<div class="a" style="left:14.40px;top:208.57px;width:6.30px;height:0.60px;background:#f4f5f8"></div>
<svg style="left:21.9px;top:201.76px" width="5" height="5"><path d="M0.3 0.3h3.8v4H0.3z" fill="none" stroke="#3e4657" stroke-width="0.55"/><rect x="0" y="0" width="4.4" height="0.9" fill="#3e4657"/><rect x="0" y="3.7" width="4.4" height="0.9" fill="#3e4657"/></svg>
<div class="t" style="font-size:4.6px;line-height:5.75px;top:202.08px;color:#1f2a3c;left:24.50px;width:15.00px;text-align:right;">20</div>
<div class="t" style="font-size:4.6px;line-height:5.75px;top:202.08px;color:#1f2a3c;left:41.60px;">51</div>
<div class="t" style="font-size:4.6px;line-height:5.75px;top:202.08px;color:#1f2a3c;left:56.80px;">5100000</div>
<div class="t" style="font-size:4.6px;line-height:5.75px;top:202.08px;color:#1f2a3c;left:90.60px;">Bekkeinntak</div>
<div class="t" style="font-size:4.6px;line-height:5.75px;top:202.08px;color:#1f2a3c;left:230.60px;">stk</div>
<div class="t" style="font-size:4.6px;line-height:5.75px;top:202.08px;color:#1f2a3c;left:246.30px;width:30.00px;text-align:right;">4,00</div>
<div class="t" style="font-size:4.6px;line-height:5.75px;top:202.08px;color:#1f2a3c;left:279.30px;width:30.00px;text-align:right;">3 600</div>
<div class="t" style="font-size:4.6px;line-height:5.75px;top:202.08px;color:#1f2a3c;left:308.10px;width:30.00px;text-align:right;">7 408,77</div>
<div class="t" style="font-size:4.6px;line-height:5.75px;top:202.08px;color:#1f2a3c;left:336.30px;width:30.00px;text-align:right;">14 406,00</div>
<div class="t" style="font-size:4.6px;line-height:5.75px;top:202.08px;color:#1f2a3c;left:367.50px;width:20.00px;text-align:right;">0 %</div>
<div class="t" style="font-size:4.6px;line-height:5.75px;top:202.08px;color:#1f2a3c;left:396.30px;width:40.00px;text-align:right;">57 624</div>
<div class="t" style="font-size:4.6px;line-height:5.75px;top:202.08px;color:#1f2a3c;left:486.80px;">Prosess 45.703</div>
<div class="a" style="left:20.70px;top:217.20px;width:516.50px;height:0.60px;background:#e9ecf1"></div>
<div class="a" style="left:14.40px;top:217.20px;width:6.30px;height:0.60px;background:#f4f5f8"></div>
<svg style="left:21.9px;top:210.39px" width="5" height="5"><rect x="0" y="0" width="4.4" height="0.9" fill="#3e4657"/><rect x="0" y="3.7" width="4.4" height="0.9" fill="#3e4657"/><path d="M0.3 0.5v3.6M4.1 0.5v3.6M0.8 1L2.2 2.3 3.6 1M0.8 3.6L2.2 2.3 3.6 3.6" stroke="#3e4657" stroke-width="0.5" fill="none"/></svg>
<div class="t" style="font-size:4.6px;line-height:5.75px;top:210.71px;color:#1f2a3c;left:24.50px;width:15.00px;text-align:right;">23</div>
<div class="t" style="font-size:4.6px;line-height:5.75px;top:210.71px;color:#1f2a3c;left:41.60px;">51</div>
<div class="t" style="font-size:4.6px;line-height:5.75px;top:210.71px;color:#1f2a3c;left:56.80px;">5100000</div>
<div class="t" style="font-size:4.6px;line-height:5.75px;top:210.71px;color:#1f2a3c;left:90.60px;">Bekkeinntak</div>
<div class="t" style="font-size:4.6px;line-height:5.75px;top:210.71px;color:#1f2a3c;left:230.60px;">stk</div>
<div class="t" style="font-size:4.6px;line-height:5.75px;top:210.71px;color:#1f2a3c;left:246.30px;width:30.00px;text-align:right;">2,00</div>
<div class="t" style="font-size:4.6px;line-height:5.75px;top:210.71px;color:#1f2a3c;left:279.30px;width:30.00px;text-align:right;">3 600</div>
<div class="t" style="font-size:4.6px;line-height:5.75px;top:210.71px;color:#1f2a3c;left:308.10px;width:30.00px;text-align:right;">7 412,58</div>
<div class="t" style="font-size:4.6px;line-height:5.75px;top:210.71px;color:#1f2a3c;left:336.30px;width:30.00px;text-align:right;">14 406,00</div>
<div class="t" style="font-size:4.6px;line-height:5.75px;top:210.71px;color:#1f2a3c;left:367.50px;width:20.00px;text-align:right;">0 %</div>
<div class="t" style="font-size:4.6px;line-height:5.75px;top:210.71px;color:#1f2a3c;left:396.30px;width:40.00px;text-align:right;">28 812</div>
<div class="t" style="font-size:4.6px;line-height:5.75px;top:210.71px;color:#1f2a3c;left:486.80px;">Prosess 45.704</div>
<div class="a" style="left:20.70px;top:225.83px;width:516.50px;height:0.60px;background:#e9ecf1"></div>
<div class="a" style="left:14.40px;top:225.83px;width:6.30px;height:0.60px;background:#f4f5f8"></div>
<svg style="left:21.9px;top:219.02px" width="5" height="5"><rect x="0.4" y="0.4" width="3.6" height="3.8" rx="0.4" fill="none" stroke="#3e4657" stroke-width="0.7"/><rect x="0.4" y="2" width="3.6" height="0.6" fill="#3e4657"/></svg>
<div class="t" style="font-size:4.6px;line-height:5.75px;top:219.34px;color:#1f2a3c;left:24.50px;width:15.00px;text-align:right;">26</div>
<div class="t" style="font-size:4.6px;line-height:5.75px;top:219.34px;color:#1f2a3c;left:41.60px;">51</div>
<div class="t" style="font-size:4.6px;line-height:5.75px;top:219.34px;color:#1f2a3c;left:56.80px;">5100000</div>
<div class="t" style="font-size:4.6px;line-height:5.75px;top:219.34px;color:#1f2a3c;left:90.60px;">Bekkeinntak</div>
<div class="t" style="font-size:4.6px;line-height:5.75px;top:219.34px;color:#1f2a3c;left:230.60px;">stk</div>
<div class="t" style="font-size:4.6px;line-height:5.75px;top:219.34px;color:#1f2a3c;left:246.30px;width:30.00px;text-align:right;">2,00</div>
<div class="t" style="font-size:4.6px;line-height:5.75px;top:219.34px;color:#1f2a3c;left:279.30px;width:30.00px;text-align:right;">6 150</div>
<div class="t" style="font-size:4.6px;line-height:5.75px;top:219.34px;color:#1f2a3c;left:308.10px;width:30.00px;text-align:right;">15 802,54</div>
<div class="t" style="font-size:4.6px;line-height:5.75px;top:219.34px;color:#1f2a3c;left:336.30px;width:30.00px;text-align:right;">23 985,25</div>
<div class="t" style="font-size:4.6px;line-height:5.75px;top:219.34px;color:#1f2a3c;left:367.50px;width:20.00px;text-align:right;">0 %</div>
<div class="t" style="font-size:4.6px;line-height:5.75px;top:219.34px;color:#1f2a3c;left:396.30px;width:40.00px;text-align:right;">47 971</div>
<div class="t" style="font-size:4.6px;line-height:5.75px;top:219.34px;color:#1f2a3c;left:486.80px;">Prosess 45.705</div>
<div class="a" style="left:20.70px;top:234.46px;width:516.50px;height:0.60px;background:#e9ecf1"></div>
<div class="a" style="left:14.40px;top:234.46px;width:6.30px;height:0.60px;background:#f4f5f8"></div>
<svg style="left:21.9px;top:227.65px" width="5" height="5"><rect x="0.4" y="0.4" width="3.6" height="3.8" rx="0.4" fill="none" stroke="#cfd3da" stroke-width="0.7"/><rect x="0.4" y="2" width="3.6" height="0.6" fill="#cfd3da"/></svg>
<div class="t" style="font-size:4.6px;line-height:5.75px;top:227.97px;color:#1f2a3c;left:24.50px;width:15.00px;text-align:right;">29</div>
<div class="t" style="font-size:4.6px;line-height:5.75px;top:227.97px;color:#1f2a3c;left:41.60px;">51</div>
<div class="t" style="font-size:4.6px;line-height:5.75px;top:227.97px;color:#1f2a3c;left:56.80px;">5972180</div>
<div class="t" style="font-size:4.6px;line-height:5.75px;top:227.97px;color:#1f2a3c;left:90.60px;">Skråskjæring Ø600 mm rør</div>
<div class="t" style="font-size:4.6px;line-height:5.75px;top:227.97px;color:#1f2a3c;left:230.60px;">stk</div>
<div class="t" style="font-size:4.6px;line-height:5.75px;top:227.97px;color:#1f2a3c;left:246.30px;width:30.00px;text-align:right;">9,00</div>
<div class="t" style="font-size:4.6px;line-height:5.75px;top:227.97px;color:#1f2a3c;left:279.30px;width:30.00px;text-align:right;">0</div>
<div class="t" style="font-size:4.6px;line-height:5.75px;top:227.97px;color:#1f2a3c;left:308.10px;width:30.00px;text-align:right;">1 200,00</div>
<div class="t" style="font-size:4.6px;line-height:5.75px;top:227.97px;color:#1f2a3c;left:336.30px;width:30.00px;text-align:right;">1 580,00</div>
<div class="t" style="font-size:4.6px;line-height:5.75px;top:227.97px;color:#1f2a3c;left:367.50px;width:20.00px;text-align:right;">10 %</div>
<div class="t" style="font-size:4.6px;line-height:5.75px;top:227.97px;color:#1f2a3c;left:396.30px;width:40.00px;text-align:right;">12 600</div>
<div class="t" style="font-size:4.6px;line-height:5.75px;top:227.97px;color:#1f2a3c;left:486.80px;">Prosess 45.7101</div>
<div class="a" style="left:20.70px;top:243.09px;width:516.50px;height:0.60px;background:#e9ecf1"></div>
<div class="a" style="left:14.40px;top:243.09px;width:6.30px;height:0.60px;background:#f4f5f8"></div>
<svg style="left:21.9px;top:236.28px" width="5" height="5"><rect x="0.4" y="0.4" width="3.6" height="3.8" rx="0.4" fill="none" stroke="#cfd3da" stroke-width="0.7"/><rect x="0.4" y="2" width="3.6" height="0.6" fill="#cfd3da"/></svg>
<div class="t" style="font-size:4.6px;line-height:5.75px;top:236.60px;color:#1f2a3c;left:24.50px;width:15.00px;text-align:right;">30</div>
<div class="t" style="font-size:4.6px;line-height:5.75px;top:236.60px;color:#1f2a3c;left:41.60px;">51</div>
<div class="t" style="font-size:4.6px;line-height:5.75px;top:236.60px;color:#1f2a3c;left:56.80px;">5972185</div>
<div class="t" style="font-size:4.6px;line-height:5.75px;top:236.60px;color:#1f2a3c;left:90.60px;">Skråskjæring Ø800 mm rør</div>
<div class="t" style="font-size:4.6px;line-height:5.75px;top:236.60px;color:#1f2a3c;left:230.60px;">stk</div>
<div class="t" style="font-size:4.6px;line-height:5.75px;top:236.60px;color:#1f2a3c;left:246.30px;width:30.00px;text-align:right;">3,00</div>
<div class="t" style="font-size:4.6px;line-height:5.75px;top:236.60px;color:#1f2a3c;left:279.30px;width:30.00px;text-align:right;">0</div>
<div class="t" style="font-size:4.6px;line-height:5.75px;top:236.60px;color:#1f2a3c;left:308.10px;width:30.00px;text-align:right;">1 500,00</div>
<div class="t" style="font-size:4.6px;line-height:5.75px;top:236.60px;color:#1f2a3c;left:336.30px;width:30.00px;text-align:right;">2 520,00</div>
<div class="t" style="font-size:4.6px;line-height:5.75px;top:236.60px;color:#1f2a3c;left:367.50px;width:20.00px;text-align:right;">20 %</div>
<div class="t" style="font-size:4.6px;line-height:5.75px;top:236.60px;color:#1f2a3c;left:396.30px;width:40.00px;text-align:right;">5 400</div>
<div class="t" style="font-size:4.6px;line-height:5.75px;top:236.60px;color:#1f2a3c;left:486.80px;">Prosess 45.7102</div>
<div class="a" style="left:20.70px;top:251.72px;width:516.50px;height:0.60px;background:#e9ecf1"></div>
<div class="a" style="left:14.40px;top:251.72px;width:6.30px;height:0.60px;background:#f4f5f8"></div>
<svg style="left:21.9px;top:244.91px" width="5" height="5"><rect x="0.4" y="0.4" width="3.6" height="3.8" rx="0.4" fill="none" stroke="#cfd3da" stroke-width="0.7"/><rect x="0.4" y="2" width="3.6" height="0.6" fill="#cfd3da"/></svg>
<div class="t" style="font-size:4.6px;line-height:5.75px;top:245.23px;color:#1f2a3c;left:24.50px;width:15.00px;text-align:right;">31</div>
<div class="t" style="font-size:4.6px;line-height:5.75px;top:245.23px;color:#1f2a3c;left:41.60px;">51</div>
<div class="t" style="font-size:4.6px;line-height:5.75px;top:245.23px;color:#1f2a3c;left:56.80px;">5972190</div>
<div class="t" style="font-size:4.6px;line-height:5.75px;top:245.23px;color:#1f2a3c;left:90.60px;">Skråskjæring Ø1000 mm rør</div>
<div class="t" style="font-size:4.6px;line-height:5.75px;top:245.23px;color:#1f2a3c;left:230.60px;">stk</div>
<div class="t" style="font-size:4.6px;line-height:5.75px;top:245.23px;color:#1f2a3c;left:246.30px;width:30.00px;text-align:right;">3,00</div>
<div class="t" style="font-size:4.6px;line-height:5.75px;top:245.23px;color:#1f2a3c;left:279.30px;width:30.00px;text-align:right;">0</div>
<div class="t" style="font-size:4.6px;line-height:5.75px;top:245.23px;color:#1f2a3c;left:308.10px;width:30.00px;text-align:right;">1 960,00</div>
<div class="t" style="font-size:4.6px;line-height:5.75px;top:245.23px;color:#1f2a3c;left:336.30px;width:30.00px;text-align:right;">4 000,00</div>
<div class="t" style="font-size:4.6px;line-height:5.75px;top:245.23px;color:#1f2a3c;left:367.50px;width:20.00px;text-align:right;">30 %</div>
<div class="t" style="font-size:4.6px;line-height:5.75px;top:245.23px;color:#1f2a3c;left:396.30px;width:40.00px;text-align:right;">6 600</div>
<div class="t" style="font-size:4.6px;line-height:5.75px;top:245.23px;color:#1f2a3c;left:486.80px;">Prosess 45.7103</div>
</div>
<div class="a" style="left:537.20px;top:112.60px;width:7.00px;height:145.40px;background:linear-gradient(90deg,#e8ebf0,#f5f6f8);border-left:0.6px solid #d9dee6"></div>
<div class="a" style="left:537.60px;top:112.90px;width:6.30px;height:8.60px;background:linear-gradient(#f4f5f8,#e0e4ea)"></div>
<div class="a" style="left:537.60px;top:121.00px;width:6.20px;height:66.00px;background:linear-gradient(90deg,#fdfdfe,#e8ebf0);border:0.5px solid #c3cad5;border-radius:1px"></div>
<div class="a" style="left:539.00px;top:152.00px;width:3.30px;height:0.60px;background:#8f9aac"></div>
<div class="a" style="left:539.00px;top:153.30px;width:3.30px;height:0.60px;background:#8f9aac"></div>
<div class="a" style="left:539.00px;top:154.60px;width:3.30px;height:0.60px;background:#8f9aac"></div>
<svg style="left:539.3px;top:116px" width="3" height="2"><path d="M0 1.8L1.4 0.2L2.8 1.8z" fill="#4d5870"/></svg>
<svg style="left:539.3px;top:253.2px" width="3" height="2"><path d="M0 0.2L1.4 1.8L2.8 0.2z" fill="#4d5870"/></svg>
<div class="a" style="left:14.40px;top:246.10px;width:522.80px;height:11.80px;background:linear-gradient(#eef0f4,#dfe3ea);border-top:0.6px solid #c5ccd7"></div>
<div class="a" style="left:278.70px;top:248.00px;width:31.30px;height:8.90px;background:#fff"></div>
<div class="t" style="font-size:4.9px;line-height:6.12px;top:250.24px;color:#1f2a3c;left:279.00px;width:30.00px;text-align:right;">1 018 728</div>
<div class="a" style="left:389.00px;top:248.00px;width:48.20px;height:8.90px;background:#fff"></div>
<div class="t" style="font-size:4.9px;line-height:6.12px;top:250.24px;color:#1f2a3c;left:396.10px;width:40.00px;text-align:right;">2 049 753</div>
<div class="a" style="left:13.80px;top:257.90px;width:530.40px;height:0.70px;background:#b6c1d0"></div>
<div class="a" style="left:12.60px;top:258.60px;width:534.40px;height:3.40px;background:#bcc7d6"></div>
<div class="a" style="left:277.00px;top:260.00px;width:0.80px;height:0.80px;background:#8a97ab"></div>
<div class="a" style="left:278.60px;top:260.00px;width:0.80px;height:0.80px;background:#8a97ab"></div>
<div class="a" style="left:280.20px;top:260.00px;width:0.80px;height:0.80px;background:#8a97ab"></div>
<div class="a" style="left:281.80px;top:260.00px;width:0.80px;height:0.80px;background:#8a97ab"></div>
<div class="a" style="left:12.60px;top:262.00px;width:534.40px;height:9.70px;background:linear-gradient(#c9d2de,#c3ccd9)"></div>
<div class="a" style="left:19.40px;top:267.30px;width:4.40px;height:0.70px;background:#d9dfe8"></div>
<div class="a" style="left:64.69px;top:267.30px;width:480.31px;height:0.70px;background:#d9dfe8"></div>
<svg style="left:14.20px;top:265.25px" width="6" height="5"><rect x="0.3" y="0.3" width="5" height="4.3" rx="1.2" fill="#d3d9e3" stroke="#a6b1c2" stroke-width="0.5"/><rect x="1.6" y="2.2" width="2.4" height="0.55" fill="#7d8aa0"/></svg>
<div class="t" style="font-size:5.3px;line-height:6.62px;top:264.54px;color:#7f8da6;left:24.80px;-webkit-text-stroke:0.1px #7f8da6">Order Deliveries</div>
<div class="a" style="left:13.80px;top:271.70px;width:530.40px;height:138.60px;background:#fff;border-left:0.6px solid #c3cbd7"></div>
<div class="a" style="left:13.80px;top:271.70px;width:530.40px;height:9.70px;background:linear-gradient(#f7f8fa,#e9ecf1 50%,#dde2e9)"></div>
<div class="a" style="left:13.80px;top:280.80px;width:530.40px;height:0.60px;background:#c9d0da"></div>
<div class="a" style="left:14.40px;top:281.40px;width:6.35px;height:17.70px;background:linear-gradient(90deg,#eceef3,#e2e6ec)"></div>
<div class="t" style="font-size:5.1px;line-height:6.38px;top:274.46px;color:#1f3358;left:21.95px;-webkit-text-stroke:0.15px #1f3358;width:13.35px;overflow:hidden">Lin...</div>
<div class="t" style="font-size:5.1px;line-height:6.38px;top:274.46px;color:#1f3358;left:36.70px;-webkit-text-stroke:0.15px #1f3358;width:15.60px;overflow:hidden">Avd</div>
<div class="t" style="font-size:5.1px;line-height:6.38px;top:274.46px;color:#1f3358;left:53.70px;-webkit-text-stroke:0.15px #1f3358;width:56.60px;overflow:hidden">Artikkel</div>
<div class="t" style="font-size:5.1px;line-height:6.38px;top:274.46px;color:#1f3358;left:111.70px;-webkit-text-stroke:0.15px #1f3358;width:43.60px;overflow:hidden">Beskrivelse</div>
<div class="t" style="font-size:5.1px;line-height:6.38px;top:274.46px;color:#1f3358;left:156.70px;-webkit-text-stroke:0.15px #1f3358;width:30.60px;overflow:hidden">Dato</div>
<div class="t" style="font-size:5.1px;line-height:6.38px;top:274.46px;color:#1f3358;left:188.70px;-webkit-text-stroke:0.15px #1f3358;width:22.85px;overflow:hidden">Periode</div>
<div class="t" style="font-size:5.1px;line-height:6.38px;top:274.46px;color:#1f3358;left:212.95px;-webkit-text-stroke:0.15px #1f3358;width:16.35px;overflow:hidden">Enhet</div>
<div class="t" style="font-size:5.1px;line-height:6.38px;top:274.46px;color:#1f3358;left:230.70px;-webkit-text-stroke:0.15px #1f3358;width:15.85px;overflow:hidden">Ant</div>
<div class="t" style="font-size:5.1px;line-height:6.38px;top:274.46px;color:#1f3358;left:247.95px;-webkit-text-stroke:0.15px #1f3358;width:11.85px;overflow:hidden">Ve...</div>
<div class="t" style="font-size:5.1px;line-height:6.38px;top:274.46px;color:#1f3358;left:261.20px;-webkit-text-stroke:0.15px #1f3358;width:24.35px;overflow:hidden">Kost</div>
<div class="t" style="font-size:5.1px;line-height:6.38px;top:274.46px;color:#1f3358;left:286.95px;-webkit-text-stroke:0.15px #1f3358;width:26.60px;overflow:hidden">Pris</div>
<div class="t" style="font-size:5.1px;line-height:6.38px;top:274.46px;color:#1f3358;left:314.95px;-webkit-text-stroke:0.15px #1f3358;width:16.05px;overflow:hidden">Rab</div>
<div class="t" style="font-size:5.1px;line-height:6.38px;top:274.46px;color:#1f3358;left:332.40px;-webkit-text-stroke:0.15px #1f3358;width:15.70px;overflow:hidden">Rab...</div>
<div class="t" style="font-size:5.1px;line-height:6.38px;top:274.46px;color:#1f3358;left:349.50px;-webkit-text-stroke:0.15px #1f3358;width:37.70px;overflow:hidden">Følgeseddel</div>
<div class="t" style="font-size:5.1px;line-height:6.38px;top:274.46px;color:#1f3358;left:388.60px;-webkit-text-stroke:0.15px #1f3358;width:26.70px;overflow:hidden">Beløp</div>
<div class="t" style="font-size:5.1px;line-height:6.38px;top:274.46px;color:#1f3358;left:416.70px;-webkit-text-stroke:0.15px #1f3358;width:16.85px;overflow:hidden">Ink ...</div>
<div class="t" style="font-size:5.1px;line-height:6.38px;top:274.46px;color:#1f3358;left:434.95px;-webkit-text-stroke:0.15px #1f3358;width:21.85px;overflow:hidden">Bil</div>
<div class="t" style="font-size:5.1px;line-height:6.38px;top:274.46px;color:#1f3358;left:458.20px;-webkit-text-stroke:0.15px #1f3358;width:41.90px;overflow:hidden">Kunderef</div>
<div class="t" style="font-size:5.1px;line-height:6.38px;top:274.46px;color:#1f3358;left:501.50px;-webkit-text-stroke:0.15px #1f3358;width:10.00px;overflow:hidden">Nei</div>
<div class="t" style="font-size:5.1px;line-height:6.38px;top:274.46px;color:#1f3358;left:512.90px;-webkit-text-stroke:0.15px #1f3358;width:12.30px;overflow:hidden">Ho...</div>
<div class="t" style="font-size:5.1px;line-height:6.38px;top:274.46px;color:#1f3358;left:526.60px;-webkit-text-stroke:0.15px #1f3358;width:8.30px;overflow:hidden">F...</div>
<div class="t" style="font-size:5.1px;line-height:6.38px;top:274.46px;color:#1f3358;left:536.30px;-webkit-text-stroke:0.15px #1f3358;width:7.50px;overflow:hidden">...</div>
<div class="a" style="left:20.40px;top:272.20px;width:0.70px;height:9.20px;background:#d2d8e1"></div>
<div class="a" style="left:20.45px;top:281.40px;width:0.60px;height:17.70px;background:#e9ecf1"></div>
<div class="a" style="left:35.15px;top:272.20px;width:0.70px;height:9.20px;background:#d2d8e1"></div>
<div class="a" style="left:35.20px;top:281.40px;width:0.60px;height:17.70px;background:#e9ecf1"></div>
<div class="a" style="left:52.15px;top:272.20px;width:0.70px;height:9.20px;background:#d2d8e1"></div>
<div class="a" style="left:52.20px;top:281.40px;width:0.60px;height:17.70px;background:#e9ecf1"></div>
<div class="a" style="left:110.15px;top:272.20px;width:0.70px;height:9.20px;background:#d2d8e1"></div>
<div class="a" style="left:110.20px;top:281.40px;width:0.60px;height:17.70px;background:#e9ecf1"></div>
<div class="a" style="left:155.15px;top:272.20px;width:0.70px;height:9.20px;background:#d2d8e1"></div>
<div class="a" style="left:155.20px;top:281.40px;width:0.60px;height:17.70px;background:#e9ecf1"></div>
<div class="a" style="left:187.15px;top:272.20px;width:0.70px;height:9.20px;background:#d2d8e1"></div>
<div class="a" style="left:187.20px;top:281.40px;width:0.60px;height:17.70px;background:#e9ecf1"></div>
<div class="a" style="left:211.40px;top:272.20px;width:0.70px;height:9.20px;background:#d2d8e1"></div>
<div class="a" style="left:211.45px;top:281.40px;width:0.60px;height:17.70px;background:#e9ecf1"></div>
<div class="a" style="left:229.15px;top:272.20px;width:0.70px;height:9.20px;background:#d2d8e1"></div>
<div class="a" style="left:229.20px;top:281.40px;width:0.60px;height:17.70px;background:#e9ecf1"></div>
<div class="a" style="left:246.40px;top:272.20px;width:0.70px;height:9.20px;background:#d2d8e1"></div>
<div class="a" style="left:246.45px;top:281.40px;width:0.60px;height:17.70px;background:#e9ecf1"></div>
<div class="a" style="left:259.65px;top:272.20px;width:0.70px;height:9.20px;background:#d2d8e1"></div>
<div class="a" style="left:259.70px;top:281.40px;width:0.60px;height:17.70px;background:#e9ecf1"></div>
<div class="a" style="left:285.40px;top:272.20px;width:0.70px;height:9.20px;background:#d2d8e1"></div>
<div class="a" style="left:285.45px;top:281.40px;width:0.60px;height:17.70px;background:#e9ecf1"></div>
<div class="a" style="left:313.40px;top:272.20px;width:0.70px;height:9.20px;background:#d2d8e1"></div>
<div class="a" style="left:313.45px;top:281.40px;width:0.60px;height:17.70px;background:#e9ecf1"></div>
<div class="a" style="left:330.85px;top:272.20px;width:0.70px;height:9.20px;background:#d2d8e1"></div>
<div class="a" style="left:330.90px;top:281.40px;width:0.60px;height:17.70px;background:#e9ecf1"></div>
<div class="a" style="left:347.95px;top:272.20px;width:0.70px;height:9.20px;background:#d2d8e1"></div>
<div class="a" style="left:348.00px;top:281.40px;width:0.60px;height:17.70px;background:#e9ecf1"></div>
<div class="a" style="left:387.05px;top:272.20px;width:0.70px;height:9.20px;background:#d2d8e1"></div>
<div class="a" style="left:387.10px;top:281.40px;width:0.60px;height:17.70px;background:#e9ecf1"></div>
<div class="a" style="left:415.15px;top:272.20px;width:0.70px;height:9.20px;background:#d2d8e1"></div>
<div class="a" style="left:415.20px;top:281.40px;width:0.60px;height:17.70px;background:#e9ecf1"></div>
<div class="a" style="left:433.40px;top:272.20px;width:0.70px;height:9.20px;background:#d2d8e1"></div>
<div class="a" style="left:433.45px;top:281.40px;width:0.60px;height:17.70px;background:#e9ecf1"></div>
<div class="a" style="left:456.65px;top:272.20px;width:0.70px;height:9.20px;background:#d2d8e1"></div>
<div class="a" style="left:456.70px;top:281.40px;width:0.60px;height:17.70px;background:#e9ecf1"></div>
<div class="a" style="left:499.95px;top:272.20px;width:0.70px;height:9.20px;background:#d2d8e1"></div>
<div class="a" style="left:500.00px;top:281.40px;width:0.60px;height:17.70px;background:#e9ecf1"></div>
<div class="a" style="left:511.35px;top:272.20px;width:0.70px;height:9.20px;background:#d2d8e1"></div>
<div class="a" style="left:511.40px;top:281.40px;width:0.60px;height:17.70px;background:#e9ecf1"></div>
<div class="a" style="left:525.05px;top:272.20px;width:0.70px;height:9.20px;background:#d2d8e1"></div>
<div class="a" style="left:525.10px;top:281.40px;width:0.60px;height:17.70px;background:#e9ecf1"></div>
<div class="a" style="left:534.75px;top:272.20px;width:0.70px;height:9.20px;background:#d2d8e1"></div>
<div class="a" style="left:534.80px;top:281.40px;width:0.60px;height:17.70px;background:#e9ecf1"></div>
<div class="a" style="left:14.40px;top:289.95px;width:529.60px;height:0.70px;background:#dde1e8"></div>
<div class="a" style="left:14.40px;top:298.75px;width:529.60px;height:0.70px;background:#dde1e8"></div>
<svg style="left:14.8px;top:284.3px" width="4" height="4"><path d="M0 0.3h3.4L1.7 3z" fill="#33415a"/></svg>
<div class="t" style="font-size:4px;line-height:5.00px;top:293.40px;color:#3b4a63;left:15.20px;">✱</div>
<div class="a" style="left:502.70px;top:282.75px;width:6.60px;height:6.20px;background:linear-gradient(#dfe3e9,#c9cfd8);border:0.4px solid #c0c7d1"></div>
<div class="a" style="left:515.25px;top:282.75px;width:6.60px;height:6.20px;background:linear-gradient(#dfe3e9,#c9cfd8);border:0.4px solid #c0c7d1"></div>
<div class="a" style="left:526.95px;top:282.75px;width:6.60px;height:6.20px;background:linear-gradient(#dfe3e9,#c9cfd8);border:0.4px solid #c0c7d1"></div>
<div class="a" style="left:502.70px;top:291.60px;width:6.60px;height:6.20px;background:linear-gradient(#dfe3e9,#c9cfd8);border:0.4px solid #c0c7d1"></div>
<div class="a" style="left:515.25px;top:291.60px;width:6.60px;height:6.20px;background:linear-gradient(#dfe3e9,#c9cfd8);border:0.4px solid #c0c7d1"></div>
<div class="a" style="left:526.95px;top:291.60px;width:6.60px;height:6.20px;background:linear-gradient(#dfe3e9,#c9cfd8);border:0.4px solid #c0c7d1"></div>
<div class="a" style="left:14.40px;top:398.30px;width:529.80px;height:12.00px;background:linear-gradient(#eef0f4,#dde2e9);border-top:0.6px solid #c5ccd7"></div>
<div class="a" style="left:247.50px;top:399.40px;width:12.00px;height:9.60px;background:#fff"></div>
<div class="a" style="left:388.75px;top:399.40px;width:26.75px;height:9.60px;background:#fff"></div>
<div class="a" style="left:416.75px;top:399.40px;width:15.75px;height:9.60px;background:#fff"></div>
<div class="a" style="left:12.60px;top:410.30px;width:535.80px;height:2.70px;background:#b3bdcc"></div>
<div class="a" style="left:544.20px;top:105.00px;width:3.00px;height:307.80px;background:#b8c3d2"></div>
<div class="a" style="left:547.20px;top:105.00px;width:2.00px;height:310.00px;background:#a9b5c7"></div>
<div class="a" style="left:549.20px;top:105.00px;width:0.80px;height:310.00px;background:#c3ccd9"></div>
<div class="a" style="left:549.60px;top:27.60px;width:148.40px;height:387.40px;background:#bfc9d8"></div>
<div class="a" style="left:549.70px;top:28.20px;width:148.30px;height:8.10px;background:#fff;border:0.6px solid #a6b3c6"></div>
<div class="t" style="font-size:4.6px;line-height:5.75px;top:30.52px;color:#a6adb8;left:551.30px;">Search...</div>
<div class="a" style="left:549.00px;top:36.50px;width:149.00px;height:212.30px;background:#fff;border:0.7px solid #9fb0c6;border-right:none"></div>
<div class="a" style="left:549.60px;top:36.50px;width:141.00px;height:9.20px;background:linear-gradient(#f7f8fa,#e9ecf1 50%,#dde2e9)"></div>
<div class="a" style="left:549.60px;top:45.10px;width:141.00px;height:0.60px;background:#c9d0da"></div>
<div class="a" style="left:549.60px;top:45.70px;width:7.00px;height:203.10px;background:linear-gradient(90deg,#eceef3,#e2e6ec)"></div>
<div class="t" style="font-size:5.1px;line-height:6.38px;top:39.01px;color:#1f3358;left:557.90px;-webkit-text-stroke:0.15px #1f3358;width:22.50px;overflow:hidden">D.Ordr...</div>
<div class="t" style="font-size:5.1px;line-height:6.38px;top:39.01px;color:#1f3358;left:581.90px;-webkit-text-stroke:0.15px #1f3358;width:20.20px;overflow:hidden">Konto</div>
<div class="t" style="font-size:5.1px;line-height:6.38px;top:39.01px;color:#1f3358;left:603.60px;-webkit-text-stroke:0.15px #1f3358;width:43.80px;overflow:hidden">Beskrivelse</div>
<div class="t" style="font-size:5.1px;line-height:6.38px;top:39.01px;color:#1f3358;left:648.90px;-webkit-text-stroke:0.15px #1f3358;width:41.50px;overflow:hidden">Kundenavn</div>
<div class="a" style="left:556.25px;top:37.00px;width:0.70px;height:8.70px;background:#d2d8e1"></div>
<div class="a" style="left:556.30px;top:45.70px;width:0.60px;height:203.10px;background:#e9ecf1"></div>
<div class="a" style="left:580.25px;top:37.00px;width:0.70px;height:8.70px;background:#d2d8e1"></div>
<div class="a" style="left:580.30px;top:45.70px;width:0.60px;height:203.10px;background:#e9ecf1"></div>
<div class="a" style="left:601.95px;top:37.00px;width:0.70px;height:8.70px;background:#d2d8e1"></div>
<div class="a" style="left:602.00px;top:45.70px;width:0.60px;height:203.10px;background:#e9ecf1"></div>
<div class="a" style="left:647.25px;top:37.00px;width:0.70px;height:8.70px;background:#d2d8e1"></div>
<div class="a" style="left:647.30px;top:45.70px;width:0.60px;height:203.10px;background:#e9ecf1"></div>
<div class="a" style="left:690.25px;top:37.00px;width:0.70px;height:8.70px;background:#d2d8e1"></div>
<div class="a" style="left:690.30px;top:45.70px;width:0.60px;height:203.10px;background:#e9ecf1"></div>
<div class="a" style="left:549.60px;top:54.20px;width:141.00px;height:0.60px;background:#e1e5eb"></div>
<svg style="left:551.6px;top:48.3px" width="4" height="4"><path d="M0 0.3h3.4L1.7 3z" fill="#33415a"/></svg>
<div class="a" style="left:0;top:0;width:700px;height:248.30px;overflow:hidden">
<div class="a" style="left:556.60px;top:54.80px;width:134.00px;height:8.63px;background:#fdf4de"></div>
<svg style="left:551.8px;top:57.61px" width="3" height="3"><path d="M0.2 0.2L2.2 1.5L0.2 2.8z" fill="#33415a"/></svg>
<div class="a" style="left:556.60px;top:63.13px;width:134.00px;height:0.60px;background:#e9ecf1"></div>
<div class="a" style="left:549.60px;top:63.13px;width:7.00px;height:0.60px;background:#f4f5f8"></div>
<div class="t" style="font-size:4.6px;line-height:5.75px;top:56.84px;color:#1f2a3c;left:557.90px;">T10364</div>
<div class="t" style="font-size:4.6px;line-height:5.75px;top:56.84px;color:#1f2a3c;left:581.90px;">4499</div>
<div class="t" style="font-size:4.6px;line-height:5.75px;top:56.84px;color:#1f2a3c;left:603.60px;">E134 Grungedal - ...</div>
<div class="t" style="font-size:4.6px;line-height:5.75px;top:56.84px;color:#1f2a3c;left:648.90px;">Tveito Maskin AS</div>
<div class="a" style="left:556.60px;top:71.76px;width:134.00px;height:0.60px;background:#e9ecf1"></div>
<div class="a" style="left:549.60px;top:71.76px;width:7.00px;height:0.60px;background:#f4f5f8"></div>
<div class="t" style="font-size:4.6px;line-height:5.75px;top:65.47px;color:#1f2a3c;left:557.90px;">T10363</div>
<div class="t" style="font-size:4.6px;line-height:5.75px;top:65.47px;color:#1f2a3c;left:581.90px;">0</div>
<div class="t" style="font-size:4.6px;line-height:5.75px;top:65.47px;color:#1f2a3c;left:603.60px;">Truls Myhre</div>
<div class="t" style="font-size:4.6px;line-height:5.75px;top:65.47px;color:#1f2a3c;left:648.90px;">Truls Myhre</div>
<div class="a" style="left:556.60px;top:80.39px;width:134.00px;height:0.60px;background:#e9ecf1"></div>
<div class="a" style="left:549.60px;top:80.39px;width:7.00px;height:0.60px;background:#f4f5f8"></div>
<div class="t" style="font-size:4.6px;line-height:5.75px;top:74.10px;color:#1f2a3c;left:557.90px;">T10284</div>
<div class="t" style="font-size:4.6px;line-height:5.75px;top:74.10px;color:#1f2a3c;left:581.90px;">7784</div>
<div class="t" style="font-size:4.6px;line-height:5.75px;top:74.10px;color:#1f2a3c;left:603.60px;">Yli byggefelt Nota...</div>
<div class="t" style="font-size:4.6px;line-height:5.75px;top:74.10px;color:#1f2a3c;left:648.90px;">Entreprenørtekni...</div>
<div class="a" style="left:556.60px;top:89.02px;width:134.00px;height:0.60px;background:#e9ecf1"></div>
<div class="a" style="left:549.60px;top:89.02px;width:7.00px;height:0.60px;background:#f4f5f8"></div>
<div class="t" style="font-size:4.6px;line-height:5.75px;top:82.73px;color:#1f2a3c;left:557.90px;">T10362</div>
<div class="t" style="font-size:4.6px;line-height:5.75px;top:82.73px;color:#1f2a3c;left:581.90px;">0</div>
<div class="t" style="font-size:4.6px;line-height:5.75px;top:82.73px;color:#1f2a3c;left:603.60px;">Slamavskiller 12 m³</div>
<div class="t" style="font-size:4.6px;line-height:5.75px;top:82.73px;color:#1f2a3c;left:648.90px;">Børge Mehammer</div>
<div class="a" style="left:556.60px;top:97.65px;width:134.00px;height:0.60px;background:#e9ecf1"></div>
<div class="a" style="left:549.60px;top:97.65px;width:7.00px;height:0.60px;background:#f4f5f8"></div>
<div class="t" style="font-size:4.6px;line-height:5.75px;top:91.36px;color:#1f2a3c;left:557.90px;">T10360</div>
<div class="t" style="font-size:4.6px;line-height:5.75px;top:91.36px;color:#1f2a3c;left:581.90px;">358</div>
<div class="t" style="font-size:4.6px;line-height:5.75px;top:91.36px;color:#1f2a3c;left:603.60px;">Kirkegårdsveien</div>
<div class="t" style="font-size:4.6px;line-height:5.75px;top:91.36px;color:#1f2a3c;left:648.90px;">Kirkenes Ferdigb...</div>
<div class="a" style="left:556.60px;top:106.28px;width:134.00px;height:0.60px;background:#e9ecf1"></div>
<div class="a" style="left:549.60px;top:106.28px;width:7.00px;height:0.60px;background:#f4f5f8"></div>
<div class="t" style="font-size:4.6px;line-height:5.75px;top:99.99px;color:#1f2a3c;left:557.90px;">T10361</div>
<div class="t" style="font-size:4.6px;line-height:5.75px;top:99.99px;color:#1f2a3c;left:581.90px;">6385</div>
<div class="t" style="font-size:4.6px;line-height:5.75px;top:99.99px;color:#1f2a3c;left:603.60px;">Kvildal</div>
<div class="t" style="font-size:4.6px;line-height:5.75px;top:99.99px;color:#1f2a3c;left:648.90px;">Ola Fisketjøn A/S</div>
<div class="a" style="left:556.60px;top:114.91px;width:134.00px;height:0.60px;background:#e9ecf1"></div>
<div class="a" style="left:549.60px;top:114.91px;width:7.00px;height:0.60px;background:#f4f5f8"></div>
<div class="t" style="font-size:4.6px;line-height:5.75px;top:108.62px;color:#1f2a3c;left:557.90px;">T10354</div>
<div class="t" style="font-size:4.6px;line-height:5.75px;top:108.62px;color:#1f2a3c;left:581.90px;">35701</div>
<div class="t" style="font-size:4.6px;line-height:5.75px;top:108.62px;color:#1f2a3c;left:603.60px;">RV7 Sokna Ørgen...</div>
<div class="t" style="font-size:4.6px;line-height:5.75px;top:108.62px;color:#1f2a3c;left:648.90px;">Implenia AS</div>
<div class="a" style="left:556.60px;top:123.54px;width:134.00px;height:0.60px;background:#e9ecf1"></div>
<div class="a" style="left:549.60px;top:123.54px;width:7.00px;height:0.60px;background:#f4f5f8"></div>
<div class="t" style="font-size:4.6px;line-height:5.75px;top:117.25px;color:#1f2a3c;left:557.90px;">T10358</div>
<div class="t" style="font-size:4.6px;line-height:5.75px;top:117.25px;color:#1f2a3c;left:581.90px;">17025</div>
<div class="t" style="font-size:4.6px;line-height:5.75px;top:117.25px;color:#1f2a3c;left:603.60px;">K33 Avløe stasjon</div>
<div class="t" style="font-size:4.6px;line-height:5.75px;top:117.25px;color:#1f2a3c;left:648.90px;">Veidekke Entrepr...</div>
<div class="a" style="left:556.60px;top:132.17px;width:134.00px;height:0.60px;background:#e9ecf1"></div>
<div class="a" style="left:549.60px;top:132.17px;width:7.00px;height:0.60px;background:#f4f5f8"></div>
<div class="t" style="font-size:4.6px;line-height:5.75px;top:125.88px;color:#1f2a3c;left:557.90px;">T10359</div>
<div class="t" style="font-size:4.6px;line-height:5.75px;top:125.88px;color:#1f2a3c;left:581.90px;">0</div>
<div class="t" style="font-size:4.6px;line-height:5.75px;top:125.88px;color:#1f2a3c;left:603.60px;">Karlsten, stable...</div>
<div class="t" style="font-size:4.6px;line-height:5.75px;top:125.88px;color:#1f2a3c;left:648.90px;">Tore Tøn</div>
<div class="a" style="left:556.60px;top:140.80px;width:134.00px;height:0.60px;background:#e9ecf1"></div>
<div class="a" style="left:549.60px;top:140.80px;width:7.00px;height:0.60px;background:#f4f5f8"></div>
<div class="t" style="font-size:4.6px;line-height:5.75px;top:134.51px;color:#1f2a3c;left:557.90px;">T10353</div>
<div class="t" style="font-size:4.6px;line-height:5.75px;top:134.51px;color:#1f2a3c;left:581.90px;">0</div>
<div class="t" style="font-size:4.6px;line-height:5.75px;top:134.51px;color:#1f2a3c;left:603.60px;">Tverrforbindelsen...</div>
<div class="t" style="font-size:4.6px;line-height:5.75px;top:134.51px;color:#1f2a3c;left:648.90px;">Johan Ragnerud ...</div>
<div class="a" style="left:556.60px;top:149.43px;width:134.00px;height:0.60px;background:#e9ecf1"></div>
<div class="a" style="left:549.60px;top:149.43px;width:7.00px;height:0.60px;background:#f4f5f8"></div>
<div class="t" style="font-size:4.6px;line-height:5.75px;top:143.14px;color:#1f2a3c;left:557.90px;">T10357</div>
<div class="t" style="font-size:4.6px;line-height:5.75px;top:143.14px;color:#1f2a3c;left:581.90px;">35701</div>
<div class="t" style="font-size:4.6px;line-height:5.75px;top:143.14px;color:#1f2a3c;left:603.60px;">Tresfjordbrua</div>
<div class="t" style="font-size:4.6px;line-height:5.75px;top:143.14px;color:#1f2a3c;left:648.90px;">Implenia AS</div>
<div class="a" style="left:556.60px;top:158.06px;width:134.00px;height:0.60px;background:#e9ecf1"></div>
<div class="a" style="left:549.60px;top:158.06px;width:7.00px;height:0.60px;background:#f4f5f8"></div>
<div class="t" style="font-size:4.6px;line-height:5.75px;top:151.77px;color:#1f2a3c;left:557.90px;">T10350</div>
<div class="t" style="font-size:4.6px;line-height:5.75px;top:151.77px;color:#1f2a3c;left:581.90px;">6222</div>
<div class="t" style="font-size:4.6px;line-height:5.75px;top:151.77px;color:#1f2a3c;left:603.60px;">Ølen Sanyrkelag</div>
<div class="t" style="font-size:4.6px;line-height:5.75px;top:151.77px;color:#1f2a3c;left:648.90px;">Ølen Sanyrkelag</div>
<div class="a" style="left:556.60px;top:166.69px;width:134.00px;height:0.60px;background:#e9ecf1"></div>
<div class="a" style="left:549.60px;top:166.69px;width:7.00px;height:0.60px;background:#f4f5f8"></div>
<div class="t" style="font-size:4.6px;line-height:5.75px;top:160.40px;color:#1f2a3c;left:557.90px;">T10356</div>
<div class="t" style="font-size:4.6px;line-height:5.75px;top:160.40px;color:#1f2a3c;left:581.90px;">36115</div>
<div class="t" style="font-size:4.6px;line-height:5.75px;top:160.40px;color:#1f2a3c;left:603.60px;">Tilbud 31-BYM-20...</div>
<div class="t" style="font-size:4.6px;line-height:5.75px;top:160.40px;color:#1f2a3c;left:648.90px;">Askim Entrepren...</div>
<div class="a" style="left:556.60px;top:175.32px;width:134.00px;height:0.60px;background:#e9ecf1"></div>
<div class="a" style="left:549.60px;top:175.32px;width:7.00px;height:0.60px;background:#f4f5f8"></div>
<div class="t" style="font-size:4.6px;line-height:5.75px;top:169.03px;color:#1f2a3c;left:557.90px;">T10355</div>
<div class="t" style="font-size:4.6px;line-height:5.75px;top:169.03px;color:#1f2a3c;left:581.90px;">0</div>
<div class="t" style="font-size:4.6px;line-height:5.75px;top:169.03px;color:#1f2a3c;left:603.60px;">New Jersey</div>
<div class="t" style="font-size:4.6px;line-height:5.75px;top:169.03px;color:#1f2a3c;left:648.90px;">Kristiansund Base</div>
<div class="a" style="left:556.60px;top:183.95px;width:134.00px;height:0.60px;background:#e9ecf1"></div>
<div class="a" style="left:549.60px;top:183.95px;width:7.00px;height:0.60px;background:#f4f5f8"></div>
<div class="t" style="font-size:4.6px;line-height:5.75px;top:177.66px;color:#1f2a3c;left:557.90px;">T10352</div>
<div class="t" style="font-size:4.6px;line-height:5.75px;top:177.66px;color:#1f2a3c;left:581.90px;">34108</div>
<div class="t" style="font-size:4.6px;line-height:5.75px;top:177.66px;color:#1f2a3c;left:603.60px;">FV 99 Smallfjord</div>
<div class="t" style="font-size:4.6px;line-height:5.75px;top:177.66px;color:#1f2a3c;left:648.90px;">HÅB Construction...</div>
<div class="a" style="left:556.60px;top:192.58px;width:134.00px;height:0.60px;background:#e9ecf1"></div>
<div class="a" style="left:549.60px;top:192.58px;width:7.00px;height:0.60px;background:#f4f5f8"></div>
<div class="t" style="font-size:4.6px;line-height:5.75px;top:186.29px;color:#1f2a3c;left:557.90px;">T10345</div>
<div class="t" style="font-size:4.6px;line-height:5.75px;top:186.29px;color:#1f2a3c;left:581.90px;">470</div>
<div class="t" style="font-size:4.6px;line-height:5.75px;top:186.29px;color:#1f2a3c;left:603.60px;">Va-anlegg-Bøgata...</div>
<div class="t" style="font-size:4.6px;line-height:5.75px;top:186.29px;color:#1f2a3c;left:648.90px;">Brødrene Selvik AS</div>
<div class="a" style="left:556.60px;top:201.21px;width:134.00px;height:0.60px;background:#e9ecf1"></div>
<div class="a" style="left:549.60px;top:201.21px;width:7.00px;height:0.60px;background:#f4f5f8"></div>
<div class="t" style="font-size:4.6px;line-height:5.75px;top:194.92px;color:#1f2a3c;left:557.90px;">T10351</div>
<div class="t" style="font-size:4.6px;line-height:5.75px;top:194.92px;color:#1f2a3c;left:581.90px;">34007</div>
<div class="t" style="font-size:4.6px;line-height:5.75px;top:194.92px;color:#1f2a3c;left:603.60px;">Skarpnes Rør AS</div>
<div class="t" style="font-size:4.6px;line-height:5.75px;top:194.92px;color:#1f2a3c;left:648.90px;">Skarpnes Rør AS</div>
<div class="a" style="left:556.60px;top:209.84px;width:134.00px;height:0.60px;background:#e9ecf1"></div>
<div class="a" style="left:549.60px;top:209.84px;width:7.00px;height:0.60px;background:#f4f5f8"></div>
<div class="t" style="font-size:4.6px;line-height:5.75px;top:203.55px;color:#1f2a3c;left:557.90px;">T10348</div>
<div class="t" style="font-size:4.6px;line-height:5.75px;top:203.55px;color:#1f2a3c;left:581.90px;">7784</div>
<div class="t" style="font-size:4.6px;line-height:5.75px;top:203.55px;color:#1f2a3c;left:603.60px;">Larsklåvegen og ...</div>
<div class="t" style="font-size:4.6px;line-height:5.75px;top:203.55px;color:#1f2a3c;left:648.90px;">Entreprenørtekni...</div>
<div class="a" style="left:556.60px;top:218.47px;width:134.00px;height:0.60px;background:#e9ecf1"></div>
<div class="a" style="left:549.60px;top:218.47px;width:7.00px;height:0.60px;background:#f4f5f8"></div>
<div class="t" style="font-size:4.6px;line-height:5.75px;top:212.18px;color:#1f2a3c;left:557.90px;">T10003</div>
<div class="t" style="font-size:4.6px;line-height:5.75px;top:212.18px;color:#1f2a3c;left:581.90px;">10002</div>
<div class="t" style="font-size:4.6px;line-height:5.75px;top:212.18px;color:#1f2a3c;left:603.60px;">Til Haugesund lag...</div>
<div class="t" style="font-size:4.6px;line-height:5.75px;top:212.18px;color:#1f2a3c;left:648.90px;">Ølen Betong</div>
<div class="a" style="left:556.60px;top:227.10px;width:134.00px;height:0.60px;background:#e9ecf1"></div>
<div class="a" style="left:549.60px;top:227.10px;width:7.00px;height:0.60px;background:#f4f5f8"></div>
<div class="t" style="font-size:4.6px;line-height:5.75px;top:220.81px;color:#1f2a3c;left:557.90px;">A1005</div>
<div class="t" style="font-size:4.6px;line-height:5.75px;top:220.81px;color:#1f2a3c;left:581.90px;">5349</div>
<div class="t" style="font-size:4.6px;line-height:5.75px;top:220.81px;color:#1f2a3c;left:603.60px;">Diesel</div>
<div class="t" style="font-size:4.6px;line-height:5.75px;top:220.81px;color:#1f2a3c;left:648.90px;">Ølen Betong Tra...</div>
<div class="a" style="left:556.60px;top:235.73px;width:134.00px;height:0.60px;background:#e9ecf1"></div>
<div class="a" style="left:549.60px;top:235.73px;width:7.00px;height:0.60px;background:#f4f5f8"></div>
<div class="t" style="font-size:4.6px;line-height:5.75px;top:229.44px;color:#1f2a3c;left:557.90px;">T10349</div>
<div class="t" style="font-size:4.6px;line-height:5.75px;top:229.44px;color:#1f2a3c;left:581.90px;">36139</div>
<div class="t" style="font-size:4.6px;line-height:5.75px;top:229.44px;color:#1f2a3c;left:603.60px;">Tilbud</div>
<div class="t" style="font-size:4.6px;line-height:5.75px;top:229.44px;color:#1f2a3c;left:648.90px;">Geir Tangerud AS</div>
<div class="a" style="left:556.60px;top:244.36px;width:134.00px;height:0.60px;background:#e9ecf1"></div>
<div class="a" style="left:549.60px;top:244.36px;width:7.00px;height:0.60px;background:#f4f5f8"></div>
<div class="t" style="font-size:4.6px;line-height:5.75px;top:238.07px;color:#1f2a3c;left:557.90px;">T10100</div>
<div class="t" style="font-size:4.6px;line-height:5.75px;top:238.07px;color:#1f2a3c;left:581.90px;">564</div>
<div class="t" style="font-size:4.6px;line-height:5.75px;top:238.07px;color:#1f2a3c;left:603.60px;">Henningstad Gård</div>
<div class="t" style="font-size:4.6px;line-height:5.75px;top:238.07px;color:#1f2a3c;left:648.90px;">Vassbakk & Stål AS</div>
<div class="a" style="left:556.60px;top:252.99px;width:134.00px;height:0.60px;background:#e9ecf1"></div>
<div class="a" style="left:549.60px;top:252.99px;width:7.00px;height:0.60px;background:#f4f5f8"></div>
<div class="t" style="font-size:4.6px;line-height:5.75px;top:246.70px;color:#1f2a3c;left:557.90px;">T10164</div>
<div class="t" style="font-size:4.6px;line-height:5.75px;top:246.70px;color:#1f2a3c;left:581.90px;">564</div>
<div class="t" style="font-size:4.6px;line-height:5.75px;top:246.70px;color:#1f2a3c;left:603.60px;">E134 Kruse Fonnes...</div>
<div class="t" style="font-size:4.6px;line-height:5.75px;top:246.70px;color:#1f2a3c;left:648.90px;">Vassbakk & Stål AS</div>
</div>
<div class="a" style="left:690.60px;top:36.50px;width:7.40px;height:212.30px;background:linear-gradient(90deg,#e8ebf0,#f5f6f8);border-left:0.6px solid #d9dee6"></div>
<div class="a" style="left:691.00px;top:36.90px;width:6.70px;height:8.40px;background:linear-gradient(#f4f5f8,#e0e4ea)"></div>
<svg style="left:692.8px;top:40px" width="3" height="2"><path d="M0 1.8L1.4 0.2L2.8 1.8z" fill="#4d5870"/></svg>
<div class="a" style="left:691.30px;top:46.80px;width:6.10px;height:10.20px;background:linear-gradient(90deg,#dfe3ea,#f3f4f7);border:0.5px solid #b9c2cf;border-radius:1px"></div>
<div class="a" style="left:692.80px;top:50.60px;width:3.20px;height:0.50px;background:#8e99ab"></div>
<div class="a" style="left:692.80px;top:51.70px;width:3.20px;height:0.50px;background:#8e99ab"></div>
<div class="a" style="left:692.80px;top:52.80px;width:3.20px;height:0.50px;background:#8e99ab"></div>
<svg style="left:692.8px;top:244.3px" width="3" height="2"><path d="M0 0.2L1.4 1.8L2.8 0.2z" fill="#4d5870"/></svg>
<div class="a" style="left:549.60px;top:248.80px;width:148.40px;height:12.20px;background:#bec9d8"></div>
<div class="t" style="font-size:4.8px;line-height:6.00px;top:254.50px;color:#253355;left:551.10px;-webkit-text-stroke:0.12px #253355">Filter By</div>
<div class="a" style="left:549.90px;top:261.00px;width:148.10px;height:154.00px;background:#fff;border:0.6px solid #9fb0c6;border-right:none;border-bottom:0.8px solid #8e9bb0"></div>
<div class="a" style="left:558.00px;top:261.60px;width:140.00px;height:7.80px;background:#fdf4de"></div>
<svg style="left:553.2px;top:263.90px" width="3" height="4"><path d="M0.2 0.2L2.4 1.6L0.2 3z" fill="#222a38"/></svg>
<div class="t" style="font-size:4.6px;line-height:5.75px;top:263.43px;color:#1f2a3c;left:558.80px;">Responsible</div>
<svg style="left:553.2px;top:271.75px" width="3" height="4"><path d="M0.2 0.2L2.4 1.6L0.2 3z" fill="#222a38"/></svg>
<div class="t" style="font-size:4.6px;line-height:5.75px;top:271.28px;color:#1f2a3c;left:558.80px;">Department</div>
<svg style="left:553.2px;top:279.60px" width="3" height="4"><path d="M0.2 0.2L2.4 1.6L0.2 3z" fill="#222a38"/></svg>
<div class="t" style="font-size:4.6px;line-height:5.75px;top:279.12px;color:#1f2a3c;left:558.80px;">StatusDesc</div>
<div class="a" style="left:697.80px;top:36.40px;width:2.20px;height:378.60px;background:#2b3a56"></div>
<div class="a" style="left:698.60px;top:14.00px;width:1.40px;height:22.40px;background:#2b3a56"></div>
<div class="a" style="left:11.00px;top:415.00px;width:689.00px;height:11.00px;background:#bcc7d7"></div>
<div class="a" style="left:11.90px;top:412.80px;width:535.30px;height:2.00px;background:#f9e9a0"></div>
<div class="a" style="left:12.60px;top:415.00px;width:20.40px;height:11.00px;background:linear-gradient(#e9ecf2,#dde3eb)"></div>
<div class="a" style="left:33.00px;top:415.00px;width:43.50px;height:11.00px;background:linear-gradient(#fafbfc,#eef1f5)"></div>
<div class="t" style="font-size:4.75px;line-height:5.94px;top:418.73px;color:#1f2a3c;left:37.00px;">Record 1 of 341</div>
<div class="a" style="left:76.50px;top:415.00px;width:112.50px;height:11.00px;background:linear-gradient(#e9ecf2,#dde3eb)"></div>
<svg style="left:14.7px;top:418px" width="5" height="5"><rect x="0.3" y="0.3" width="0.9" height="4.2" fill="#838c9b"/><path d="M4.5 0.3L1.5 2.4L4.5 4.5z" fill="#838c9b"/></svg>
<svg style="left:26.6px;top:418px" width="4" height="5"><path d="M3.2 0.3L0.5 2.4L3.2 4.5z" fill="#838c9b"/></svg>
<svg style="left:79.6px;top:418px" width="4" height="5"><path d="M0.5 0.3L3.2 2.4L0.5 4.5z" fill="#3a6fd0"/></svg>
<svg style="left:90.2px;top:418px" width="5" height="5"><path d="M0.3 0.3L3.2 2.4L0.3 4.5z" fill="#3a6fd0"/><rect x="3.4" y="0.3" width="0.9" height="4.2" fill="#3a6fd0"/></svg>
<svg style="left:99px;top:417.8px" width="6" height="6"><path d="M2.3 0.3h1.2v2h2v1.2h-2v2H2.3v-2h-2V2.3h2z" fill="#3a6fd0"/></svg>
<svg style="left:109px;top:417.5px" width="6" height="6"><rect x="0.3" y="0.3" width="5.4" height="5.4" fill="#3040a8"/><rect x="1.2" y="0.6" width="3.4" height="2" fill="#dfe6f5"/><rect x="1.6" y="3.6" width="2.6" height="2" fill="#8896c8"/></svg>
<svg style="left:119px;top:417.6px" width="6" height="6"><path d="M0.5 0.5L5.3 5.3M5.3 0.5L0.5 5.3" stroke="#2a2f38" stroke-width="0.8"/></svg>
<svg style="left:129px;top:417.3px" width="7" height="7"><rect x="1.2" y="2" width="3.6" height="4.5" fill="#f0b020"/><rect x="3" y="0.5" width="3.5" height="4" fill="none" stroke="#3a6fd0" stroke-width="0.6"/><rect x="0.3" y="3.5" width="1.5" height="2" fill="#4fbf4a"/></svg>
<svg style="left:140.2px;top:418.2px" width="6" height="6"><path d="M0.4 0.5L2.8 3v2.4M5.4 0.5L2.8 3" stroke="#25282e" stroke-width="0.9" fill="none"/></svg>
<svg style="left:149.8px;top:417.6px" width="7" height="7"><path d="M0.4 2.8L1.5 0.3 2.6 2.8M0.8 2H2.2" stroke="#2c5fd0" stroke-width="0.6" fill="none"/><path d="M0.5 3.4h2L0.5 5.6h2" stroke="#c0392b" stroke-width="0.6" fill="none"/><path d="M5 0.3v5.2M4 4.4L5 5.7 6 4.4" stroke="#111" stroke-width="0.7" fill="none"/></svg>
<svg style="left:160.8px;top:417.8px" width="7" height="6"><path d="M0.8 2.6C1.2 1 3.6 0.4 5 1.6" stroke="#2f7be0" stroke-width="1" fill="none"/><path d="M4.2 0.2L6 1.8 3.9 2.4z" fill="#2f7be0"/><path d="M5.4 3.2C5 4.8 2.6 5.4 1.2 4.2" stroke="#2f7be0" stroke-width="1" fill="none"/><path d="M2 5.6L0.2 4 2.3 3.4z" fill="#2f7be0"/></svg>
<svg style="left:170.6px;top:417.5px" width="8" height="8"><circle cx="3.5" cy="3.5" r="3.4" fill="#1d3fa8"/><circle cx="3.4" cy="3.2" r="2.6" fill="#3a6ad8"/><rect x="3" y="2.8" width="1" height="2.6" fill="#fff"/><rect x="3" y="1.4" width="1" height="0.9" fill="#fff"/></svg>
<svg style="left:181.4px;top:417.5px" width="7" height="7"><rect x="0.8" y="0.3" width="5.6" height="5.4" fill="#f4a43a"/><rect x="3.5" y="0.3" width="2.9" height="2.6" fill="#f7c978"/><circle cx="2.6" cy="4" r="1.5" fill="#dfe6ef" stroke="#5d6878" stroke-width="0.5"/><path d="M5 5.5l1.2 1.2" stroke="#333" stroke-width="0.7"/></svg>
<div class="a" style="left:190.00px;top:416.80px;width:45.50px;height:8.20px;background:#fff;border:0.6px solid #b4bfcf"></div>
<div class="t" style="font-size:4.6px;line-height:5.75px;top:419.12px;color:#a6adb8;left:191.80px;">Søk</div>
<div class="a" style="left:237.00px;top:416.80px;width:43.50px;height:8.20px;background:#fff;border:0.6px solid #b4bfcf"></div>
<div class="t" style="font-size:4.6px;line-height:5.75px;top:419.12px;color:#a6adb8;left:238.60px;">Filters</div>
<svg style="left:276.7px;top:420px" width="3" height="2"><path d="M0 0h2.6L1.3 1.6z" fill="#222"/></svg>
</body></html>
